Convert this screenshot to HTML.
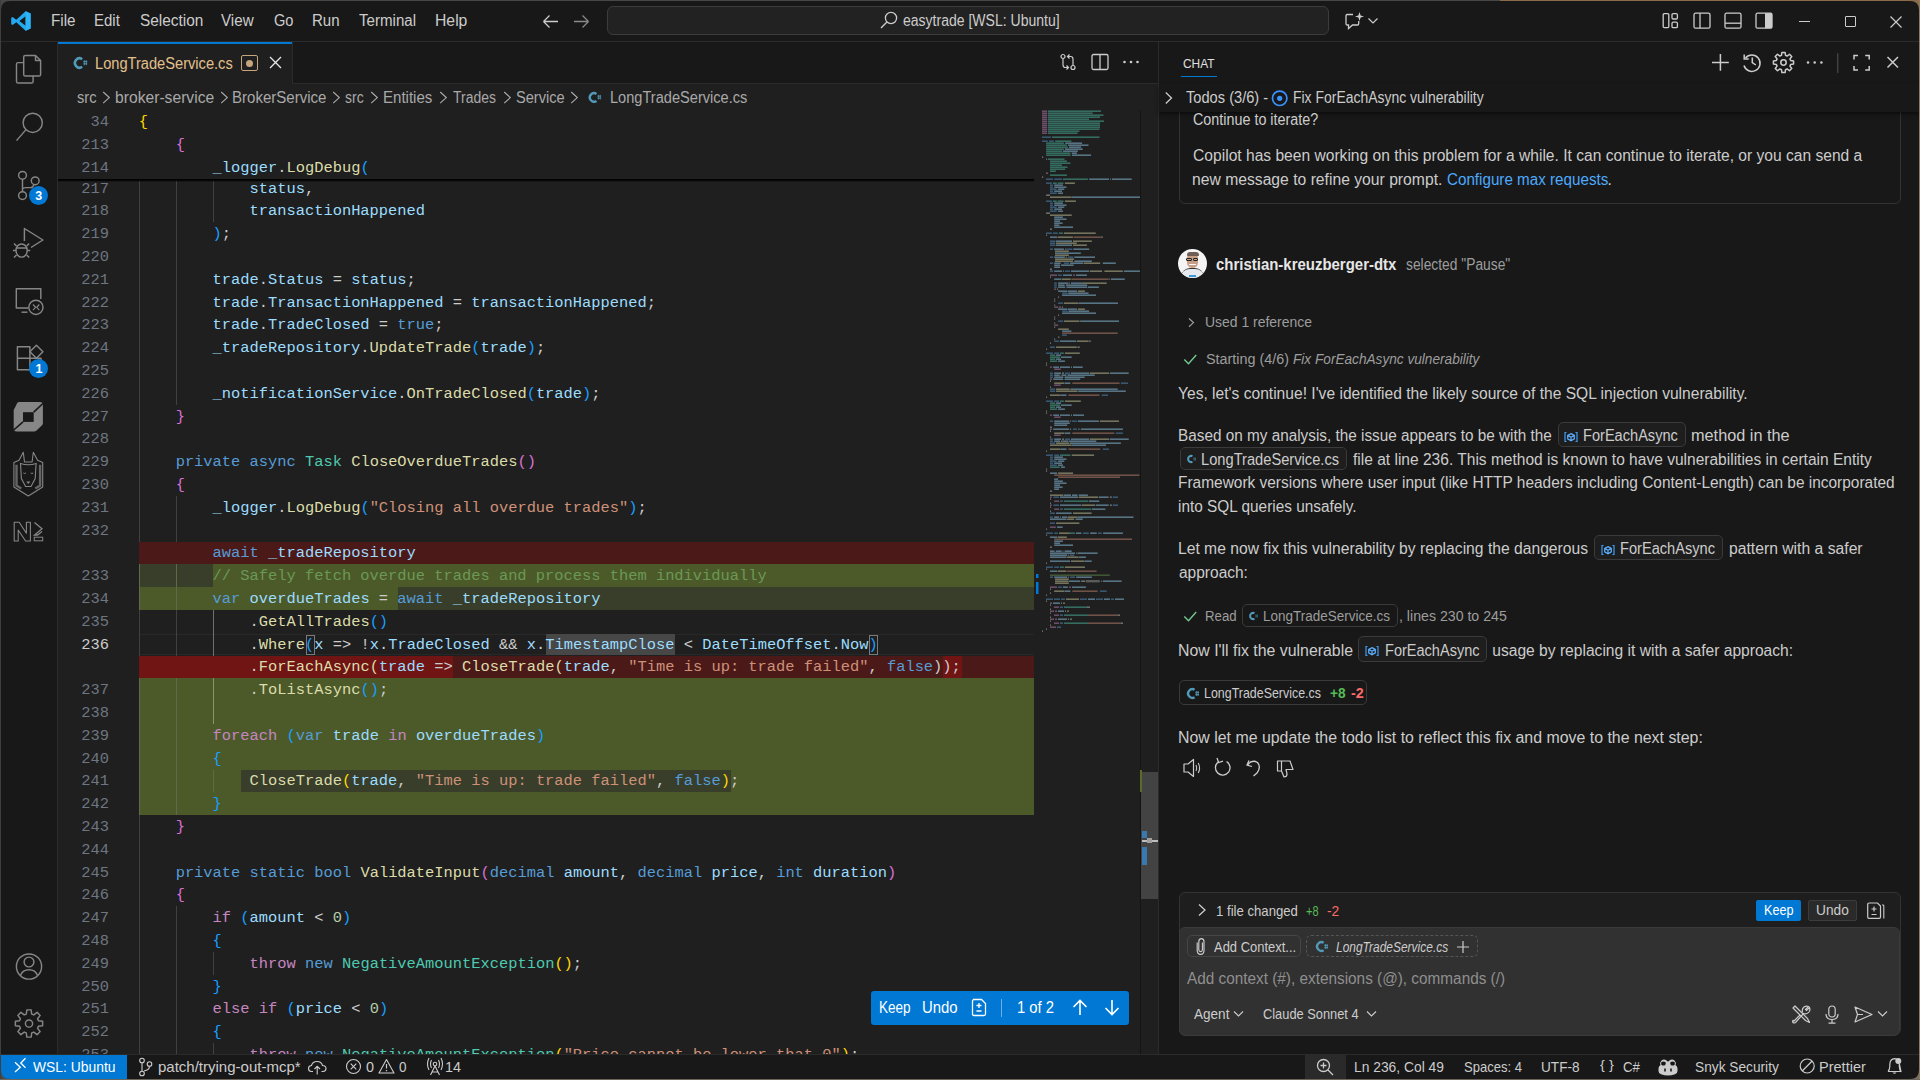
<!DOCTYPE html><html><head><meta charset="utf-8"><style>
*{margin:0;padding:0;box-sizing:border-box}
html,body{width:1920px;height:1080px;overflow:hidden;background:#181818}
.a{position:absolute;white-space:pre;line-height:0;font-family:'Liberation Sans';transform-origin:0 0}
.r{position:absolute}
.cl{position:absolute;left:0;height:22.8px;line-height:22.8px;font-family:'Liberation Mono';font-size:15.4px;white-space:pre}
</style></head><body><div class="r" style="left:0px;top:0px;width:1920px;height:1080px;background:#181818;"></div><div class="r" style="left:0px;top:41px;width:1920px;height:1px;background:#2b2b2b;"></div><svg class="r" style="left:10px;top:10px;" width="22" height="22" viewBox="0 0 22 22" fill="none"><path d="M15.6 1.2 L20.6 3.6 V18.4 L15.6 20.8 L6.3 12.3 L2.6 15.1 L1.2 14.3 V7.7 L2.6 6.9 L6.3 9.7 Z M15.6 6.2 L9.4 11 L15.6 15.8 Z" fill="#23a9f2" fill-rule="evenodd"/><path d="M15.6 1.2 L20.6 3.6 V18.4 L15.6 20.8 Z" fill="#2bb4f7"/></svg><div class="a" style="left:51.02px;top:20.62px;font-size:15.6px;color:#cccccc;transform:scaleX(0.9764);">File</div><div class="a" style="left:93.74px;top:20.62px;font-size:15.6px;color:#cccccc;transform:scaleX(0.9609);">Edit</div><div class="a" style="left:139.50px;top:20.62px;font-size:15.6px;color:#cccccc;transform:scaleX(0.9878);">Selection</div><div class="a" style="left:221.30px;top:20.62px;font-size:15.6px;color:#cccccc;transform:scaleX(0.9750);">View</div><div class="a" style="left:273.60px;top:20.62px;font-size:15.6px;color:#cccccc;transform:scaleX(0.9371);">Go</div><div class="a" style="left:312.43px;top:20.62px;font-size:15.6px;color:#cccccc;transform:scaleX(0.9653);">Run</div><div class="a" style="left:359.40px;top:20.62px;font-size:15.6px;color:#cccccc;transform:scaleX(0.9682);">Terminal</div><div class="a" style="left:435.39px;top:20.62px;font-size:15.6px;color:#cccccc;transform:scaleX(1.0096);">Help</div><svg class="r" style="left:541px;top:12px;" width="19" height="19" viewBox="0 0 19 19" fill="none"><path d="M2.5 9.5 H17 M2.5 9.5 L8.5 3.5 M2.5 9.5 L8.5 15.5" stroke="#cccccc" stroke-width="1.3"/></svg><svg class="r" style="left:572px;top:12px;" width="19" height="19" viewBox="0 0 19 19" fill="none"><path d="M16.5 9.5 H2 M16.5 9.5 L10.5 3.5 M16.5 9.5 L10.5 15.5" stroke="#8a8a8a" stroke-width="1.3"/></svg><div class="r" style="left:607px;top:6px;width:722px;height:29px;background:#222222;border:1px solid #3c3c3c;border-radius:6px"></div><svg class="r" style="left:879px;top:10px;" width="20" height="20" viewBox="0 0 20 20" fill="none"><circle cx="12" cy="8" r="5.6" stroke="#cccccc" stroke-width="1.3"/><path d="M7.9 12.1 L2 18" stroke="#cccccc" stroke-width="1.4"/></svg><div class="a" style="left:902.50px;top:20.82px;font-size:15.6px;color:#cccccc;transform:scaleX(0.8989);">easytrade [WSL: Ubuntu]</div><svg class="r" style="left:1343px;top:10px;" width="22" height="22" viewBox="0 0 22 22" fill="none"><path d="M10 4.5 H4.2 Q3 4.5 3 5.7 V13.8 Q3 15 4.2 15 H5.5 V18.5 L9.5 15 H14.5 Q15.7 15 15.7 13.8 V11" stroke="#cccccc" stroke-width="1.3" fill="none"/><path d="M16.5 2 L17.6 5.4 L21 6.5 L17.6 7.6 L16.5 11 L15.4 7.6 L12 6.5 L15.4 5.4 Z" fill="#cccccc"/></svg><svg class="r" style="left:1367px;top:16px;" width="12" height="10" viewBox="0 0 12 10" fill="none"><path d="M1.5 2.5 L6 7 L10.5 2.5" stroke="#cccccc" stroke-width="1.2"/></svg><svg class="r" style="left:1661px;top:11px;" width="20" height="20" viewBox="0 0 20 20" fill="none"><rect x="2.2" y="2.6" width="5.6" height="14" rx="1" stroke="#cccccc" stroke-width="1.3"/><rect x="11" y="2.6" width="5.4" height="5.4" rx="1.2" stroke="#cccccc" stroke-width="1.3"/><rect x="11" y="11.2" width="5.4" height="5.4" rx="1.2" stroke="#cccccc" stroke-width="1.3"/></svg><svg class="r" style="left:1692px;top:11px;" width="20" height="20" viewBox="0 0 20 20" fill="none"><rect x="2" y="2.2" width="16" height="15" rx="1.5" stroke="#cccccc" stroke-width="1.3"/><path d="M8 2.2 V17.2" stroke="#cccccc" stroke-width="1.3"/></svg><svg class="r" style="left:1723px;top:11px;" width="20" height="20" viewBox="0 0 20 20" fill="none"><rect x="2" y="2.2" width="16" height="15" rx="1.5" stroke="#cccccc" stroke-width="1.3"/><path d="M2 12.2 H18" stroke="#cccccc" stroke-width="1.3"/></svg><svg class="r" style="left:1754px;top:11px;" width="20" height="20" viewBox="0 0 20 20" fill="none"><rect x="2" y="2.2" width="16" height="15" rx="1.5" stroke="#cccccc" stroke-width="1.3"/><rect x="11" y="2.2" width="7" height="15" fill="#cccccc"/></svg><div class="r" style="left:1799px;top:20.5px;width:11px;height:1.2px;background:#cccccc;"></div><div class="r" style="left:1844.5px;top:15.5px;width:11px;height:11px;border:1.2px solid #cccccc;border-radius:1px"></div><svg class="r" style="left:1889px;top:15px;" width="14" height="14" viewBox="0 0 14 14" fill="none"><path d="M1.5 1.5 L12.5 12.5 M12.5 1.5 L1.5 12.5" stroke="#cccccc" stroke-width="1.2"/></svg><div class="r" style="left:57px;top:42px;width:1px;height:1012px;background:#2b2b2b;"></div><svg class="r" style="left:0;top:0" width="57" height="1054" viewBox="0 0 57 1054"><path d="M23.7 57 Q23.7 55.4 25.3 55.4 H35.5 L40.6 60.5 V74.4 Q40.6 76 39 76 H25.3 Q23.7 76 23.7 74.4 Z M35.5 55.4 V60.5 H40.6" stroke="#868686" stroke-width="1.45" fill="none" stroke-linejoin="round"/><path d="M23.7 62.6 H18.1 Q16.5 62.6 16.5 64.2 V81.4 Q16.5 83 18.1 83 H31.5 Q33.1 83 33.1 81.4 V76" stroke="#868686" stroke-width="1.45" fill="none" stroke-linejoin="round"/><circle cx="32.7" cy="122.8" r="9.6" stroke="#868686" stroke-width="1.45" fill="none" stroke-linejoin="round"/><path d="M26 129.6 L16.5 140.6" stroke="#868686" stroke-width="1.45" fill="none" stroke-linejoin="round"/><circle cx="22.5" cy="175.3" r="3.9" stroke="#868686" stroke-width="1.45" fill="none" stroke-linejoin="round"/><circle cx="22.5" cy="195.6" r="3.9" stroke="#868686" stroke-width="1.45" fill="none" stroke-linejoin="round"/><circle cx="35.2" cy="180.8" r="3.9" stroke="#868686" stroke-width="1.45" fill="none" stroke-linejoin="round"/><path d="M22.5 179.2 V191.7 M22.5 189 Q23 187.6 26 187.6 H30.5 Q33 187.6 34 184.5" stroke="#868686" stroke-width="1.45" fill="none" stroke-linejoin="round"/><path d="M24.4 241 V228.5 L42.9 240 L31 247.5" stroke="#868686" stroke-width="1.45" fill="none" stroke-linejoin="round"/><ellipse cx="21.6" cy="250.5" rx="5.6" ry="6.6" stroke="#868686" stroke-width="1.45" fill="none" stroke-linejoin="round"/><path d="M16 250.5 H13 M27.2 250.5 H30.2 M16.5 246 L14 243.5 M26.7 246 L29.2 243.5 M16.5 255 L14 257.5 M26.7 255 L29.2 257.5 M16.5 248 H26.7" stroke="#868686" stroke-width="1.45" fill="none" stroke-linejoin="round"/><path d="M28 308 H16.3 V288.8 H40.8 V299" stroke="#868686" stroke-width="1.45" fill="none" stroke-linejoin="round"/><path d="M21.5 312.2 H27.5" stroke="#868686" stroke-width="1.45" fill="none" stroke-linejoin="round"/><circle cx="35.9" cy="307.3" r="7.1" stroke="#868686" stroke-width="1.45" fill="none" stroke-linejoin="round"/><path d="M33 304.5 L35.6 307.3 L33 310.1 M39.3 304.5 L36.7 307.3 L39.3 310.1" stroke="#868686" stroke-width="1.2" fill="none"/><path d="M17.4 346.7 H29.9 V369.8 H17.4 Z M17.4 358.2 H41 V369.8 H29.9" stroke="#868686" stroke-width="1.45" fill="none" stroke-linejoin="round"/><path d="M36.4 345.3 L42.9 351.8 L36.4 358.3 L29.9 351.8 Z" stroke="#868686" stroke-width="1.45" fill="none" stroke-linejoin="round"/><path d="M19 401.9 H40 Q42.9 401.9 42.9 404.8 V423 Q42.9 424.5 41.8 425.6 L36.5 430.5 Q35.5 431.5 34 431.5 H16.6 Q13.7 431.5 13.7 428.6 V410.5 Q13.7 409 14.8 408 L17.2 403 Q18 401.9 19 401.9 Z" fill="#868686"/><path d="M23 412.2 H33.7 V421.9 H23 Z" fill="#181818"/><path d="M33.7 412.2 L42.9 403.5 M23 421.9 L13.7 430" stroke="#181818" stroke-width="1.6"/><path d="M28.3 496 L13.9 487 V462.5 L19 460.2 L23.3 452.3 L24.5 462 H32.1 L33.3 452.3 L37.6 460.2 L42.7 462.5 V487 Z" stroke="#868686" stroke-width="1.1" fill="none" stroke-linejoin="round"/><path d="M16.5 464.8 V485.6 L21.3 488.5 M40.1 464.8 V485.6 L35.3 488.5" stroke="#868686" stroke-width="2.4" fill="none" opacity="0.7"/><path d="M20.5 463.5 Q28.3 466 36.1 463.5 L35.2 478.5 L31 486.5 H25.6 L21.4 478.5 Z" stroke="#868686" stroke-width="1.1" fill="none"/><path d="M23.4 473 Q24.7 474 26 473 M30.6 473 Q31.9 474 33.2 473" stroke="#868686" stroke-width="1"/><path d="M26.2 481.5 H30.4 L28.3 484 Z" fill="#868686"/><path d="M14.2 541 V522.2 H19.2 L26.4 533.2 V522.2 H30.4 V541 H25.6 L18.2 530 V541 Z" stroke="#868686" stroke-width="1.1" fill="none" stroke-linejoin="round"/><path d="M34.5 522.5 L42 528.8 L34.5 535 H37.5 L42 531.5" stroke="#868686" stroke-width="1.3" fill="none"/><rect x="34.2" y="537.2" width="8.5" height="3.6" stroke="#868686" stroke-width="1" fill="none"/><circle cx="29" cy="966.5" r="12.6" stroke="#868686" stroke-width="1.45" fill="none" stroke-linejoin="round"/><circle cx="29" cy="962" r="4.9" stroke="#868686" stroke-width="1.45" fill="none" stroke-linejoin="round"/><path d="M20.5 975.5 Q22.5 969.8 29 969.8 Q35.5 969.8 37.5 975.5" stroke="#868686" stroke-width="1.45" fill="none" stroke-linejoin="round"/><path d="M42.63 1021.34 L42.63 1025.66 L38.42 1026.20 L37.57 1028.25 L40.16 1031.61 L37.11 1034.66 L33.75 1032.07 L31.70 1032.92 L31.16 1037.13 L26.84 1037.13 L26.30 1032.92 L24.25 1032.07 L20.89 1034.66 L17.84 1031.61 L20.43 1028.25 L19.58 1026.20 L15.37 1025.66 L15.37 1021.34 L19.58 1020.80 L20.43 1018.75 L17.84 1015.39 L20.89 1012.34 L24.25 1014.93 L26.30 1014.08 L26.84 1009.87 L31.16 1009.87 L31.70 1014.08 L33.75 1014.93 L37.11 1012.34 L40.16 1015.39 L37.57 1018.75 L38.42 1020.80 Z" stroke="#868686" stroke-width="1.45" fill="none" stroke-linejoin="round"/><circle cx="29" cy="1023.5" r="3.6" stroke="#868686" stroke-width="1.45" fill="none" stroke-linejoin="round"/></svg><div class="r" style="left:29px;top:186px;width:19px;height:19px;border-radius:10px;background:#0078d4"></div><div class="a" style="left:35.20px;top:195.89px;font-size:12.5px;color:#ffffff;font-weight:700;">3</div><div class="r" style="left:29px;top:359px;width:19px;height:19px;border-radius:10px;background:#0078d4"></div><div class="a" style="left:35.60px;top:368.89px;font-size:12.5px;color:#ffffff;font-weight:700;">1</div><div class="r" style="left:58px;top:42px;width:1100px;height:42px;background:#181818;"></div><div class="r" style="left:58px;top:83px;width:1100px;height:1px;background:#2b2b2b;"></div><div class="r" style="left:58px;top:42px;width:234px;height:42px;background:#1f1f1f;"></div><div class="r" style="left:58px;top:42px;width:234px;height:1.5px;background:#0078d4;"></div><div class="r" style="left:292px;top:42px;width:1px;height:41px;background:#2b2b2b;"></div><svg class="r" style="left:73px;top:55.5px;" width="16.0" height="14.0" viewBox="0 0 16 14" fill="none"><path d="M9.2 3.2 A4.6 4.6 0 1 0 9.2 10.8" stroke="#519aba" stroke-width="2.6" fill="none"/><path d="M11.3 4.2 V9.2 M13.3 4.2 V9.2 M10.3 5.6 H14.3 M10.3 7.8 H14.3" stroke="#519aba" stroke-width="0.9"/></svg><div class="a" style="left:95.36px;top:63.62px;font-size:15.6px;color:#e2c08d;transform:scaleX(0.9385);">LongTradeService.cs</div><div class="r" style="left:241px;top:54.5px;width:17px;height:16.5px;border:1.6px solid #c4a57c;border-radius:2px"></div><div class="r" style="left:246.2px;top:59.5px;width:7px;height:7px;border-radius:4px;background:#c4a57c"></div><svg class="r" style="left:268px;top:55px;" width="15" height="15" viewBox="0 0 15 15" fill="none"><path d="M2 2 L13 13 M13 2 L2 13" stroke="#e8e8e8" stroke-width="1.3"/></svg><svg class="r" style="left:1058px;top:52px;" width="20" height="20" viewBox="0 0 20 20" fill="none"><circle cx="5" cy="4.5" r="2" stroke="#cccccc" stroke-width="1.2"/><circle cx="15" cy="15.5" r="2" stroke="#cccccc" stroke-width="1.2"/><path d="M5 6.5 V13 Q5 15.5 7.5 15.5 H10 M8.5 13.5 L10.5 15.5 L8.5 17.5 M15 13.5 V7 Q15 4.5 12.5 4.5 H10 M11.5 2.5 L9.5 4.5 L11.5 6.5" stroke="#cccccc" stroke-width="1.2" fill="none"/></svg><svg class="r" style="left:1090px;top:52px;" width="20" height="20" viewBox="0 0 20 20" fill="none"><rect x="2" y="2.5" width="16" height="15" rx="1.5" stroke="#cccccc" stroke-width="1.3"/><path d="M10 2.5 V17.5" stroke="#cccccc" stroke-width="1.3"/></svg><svg class="r" style="left:1121px;top:52px;" width="20" height="20" viewBox="0 0 20 20" fill="none"><circle cx="3.5" cy="10" r="1.3" fill="#cccccc"/><circle cx="10" cy="10" r="1.3" fill="#cccccc"/><circle cx="16.5" cy="10" r="1.3" fill="#cccccc"/></svg><div class="r" style="left:58px;top:84px;width:1100px;height:970px;background:#1f1f1f;"></div><div class="a" style="left:76.60px;top:98.12px;font-size:15.6px;color:#a9a9a9;transform:scaleX(0.9386);">src</div><div class="a" style="left:115.00px;top:98.12px;font-size:15.6px;color:#a9a9a9;transform:scaleX(1.0040);">broker-service</div><div class="a" style="left:232.24px;top:98.12px;font-size:15.6px;color:#a9a9a9;transform:scaleX(0.9641);">BrokerService</div><div class="a" style="left:345.40px;top:98.12px;font-size:15.6px;color:#a9a9a9;transform:scaleX(0.8957);">src</div><div class="a" style="left:383.43px;top:98.12px;font-size:15.6px;color:#a9a9a9;transform:scaleX(0.9654);">Entities</div><div class="a" style="left:453.30px;top:98.12px;font-size:15.6px;color:#a9a9a9;transform:scaleX(0.8950);">Trades</div><div class="a" style="left:516.20px;top:98.12px;font-size:15.6px;color:#a9a9a9;transform:scaleX(0.9352);">Service</div><div class="a" style="left:609.76px;top:98.12px;font-size:15.6px;color:#a9a9a9;transform:scaleX(0.9358);">LongTradeService.cs</div><svg class="r" style="left:102.0px;top:91px;" width="9" height="14" viewBox="0 0 9 14" fill="none"><path d="M1.2 1 L7.3 6.6 L1.2 12.2" stroke="#a9a9a9" stroke-width="1.15" fill="none"/></svg><svg class="r" style="left:219.5px;top:91px;" width="9" height="14" viewBox="0 0 9 14" fill="none"><path d="M1.2 1 L7.3 6.6 L1.2 12.2" stroke="#a9a9a9" stroke-width="1.15" fill="none"/></svg><svg class="r" style="left:331.8px;top:91px;" width="9" height="14" viewBox="0 0 9 14" fill="none"><path d="M1.2 1 L7.3 6.6 L1.2 12.2" stroke="#a9a9a9" stroke-width="1.15" fill="none"/></svg><svg class="r" style="left:370.3px;top:91px;" width="9" height="14" viewBox="0 0 9 14" fill="none"><path d="M1.2 1 L7.3 6.6 L1.2 12.2" stroke="#a9a9a9" stroke-width="1.15" fill="none"/></svg><svg class="r" style="left:439.2px;top:91px;" width="9" height="14" viewBox="0 0 9 14" fill="none"><path d="M1.2 1 L7.3 6.6 L1.2 12.2" stroke="#a9a9a9" stroke-width="1.15" fill="none"/></svg><svg class="r" style="left:502.5px;top:91px;" width="9" height="14" viewBox="0 0 9 14" fill="none"><path d="M1.2 1 L7.3 6.6 L1.2 12.2" stroke="#a9a9a9" stroke-width="1.15" fill="none"/></svg><svg class="r" style="left:570.2px;top:91px;" width="9" height="14" viewBox="0 0 9 14" fill="none"><path d="M1.2 1 L7.3 6.6 L1.2 12.2" stroke="#a9a9a9" stroke-width="1.15" fill="none"/></svg><svg class="r" style="left:587.5px;top:90.5px;" width="14.72" height="12.88" viewBox="0 0 16 14" fill="none"><path d="M9.2 3.2 A4.6 4.6 0 1 0 9.2 10.8" stroke="#519aba" stroke-width="2.6" fill="none"/><path d="M11.3 4.2 V9.2 M13.3 4.2 V9.2 M10.3 5.6 H14.3 M10.3 7.8 H14.3" stroke="#519aba" stroke-width="0.9"/></svg><div class="r" style="left:139px;top:541.6px;width:895px;height:22.8px;background:#4c1919;"></div><div class="r" style="left:139px;top:564.4000000000001px;width:895px;height:45.6px;background:#383e2a;"></div><div class="r" style="left:213.12px;top:564.4px;width:820.88px;height:22.8px;background:#4c5a2a;"></div><div class="r" style="left:139.2px;top:587.2px;width:258.72px;height:22.8px;background:#4c5a2a;"></div><div class="r" style="left:139px;top:655.6px;width:895px;height:22.8px;background:#4c1919;"></div><div class="r" style="left:139.2px;top:655.6px;width:314.16px;height:22.8px;background:#701414;"></div><div class="r" style="left:943.08px;top:655.6px;width:18.48px;height:22.8px;background:#701414;"></div><div class="r" style="left:139px;top:678.4000000000001px;width:895px;height:136.8px;background:#383e2a;"></div><div class="r" style="left:139.2px;top:678.4px;width:894.8px;height:22.8px;background:#4c5a2a;"></div><div class="r" style="left:139.2px;top:701.2px;width:894.8px;height:22.8px;background:#4c5a2a;"></div><div class="r" style="left:139.2px;top:724.0px;width:894.8px;height:22.8px;background:#4c5a2a;"></div><div class="r" style="left:139.2px;top:746.8px;width:894.8px;height:22.8px;background:#4c5a2a;"></div><div class="r" style="left:139.2px;top:792.4px;width:894.8px;height:22.8px;background:#4c5a2a;"></div><div class="r" style="left:139.2px;top:769.6px;width:101.64px;height:22.8px;background:#4c5a2a;"></div><div class="r" style="left:730.56px;top:769.6px;width:303.44px;height:22.8px;background:#4c5a2a;"></div><div class="r" style="left:139px;top:633.8px;width:895px;height:1.5px;background:#282828;"></div><div class="r" style="left:139px;top:653.6px;width:895px;height:1.5px;background:#282828;"></div><div class="r" style="left:545.76px;top:633.8px;width:129.36px;height:20.8px;background:#474747;"></div><div class="r" style="left:305.52px;top:634.80px;width:9.24px;height:19.80px;border:1px solid #7a7a7a"></div><div class="r" style="left:869.16px;top:634.80px;width:9.24px;height:19.80px;border:1px solid #7a7a7a"></div><div class="r" style="left:139px;top:176.8px;width:1px;height:22.8px;background:#404040;"></div><div class="r" style="left:176px;top:176.8px;width:1px;height:22.8px;background:#404040;"></div><div class="r" style="left:213px;top:176.8px;width:1px;height:22.8px;background:#404040;"></div><div class="r" style="left:139px;top:199.60000000000002px;width:1px;height:22.8px;background:#404040;"></div><div class="r" style="left:176px;top:199.60000000000002px;width:1px;height:22.8px;background:#404040;"></div><div class="r" style="left:213px;top:199.60000000000002px;width:1px;height:22.8px;background:#404040;"></div><div class="r" style="left:139px;top:222.4px;width:1px;height:22.8px;background:#404040;"></div><div class="r" style="left:176px;top:222.4px;width:1px;height:22.8px;background:#404040;"></div><div class="r" style="left:139px;top:245.20000000000002px;width:1px;height:22.8px;background:#404040;"></div><div class="r" style="left:176px;top:245.20000000000002px;width:1px;height:22.8px;background:#404040;"></div><div class="r" style="left:139px;top:268.0px;width:1px;height:22.8px;background:#404040;"></div><div class="r" style="left:176px;top:268.0px;width:1px;height:22.8px;background:#404040;"></div><div class="r" style="left:139px;top:290.8px;width:1px;height:22.8px;background:#404040;"></div><div class="r" style="left:176px;top:290.8px;width:1px;height:22.8px;background:#404040;"></div><div class="r" style="left:139px;top:313.6px;width:1px;height:22.8px;background:#404040;"></div><div class="r" style="left:176px;top:313.6px;width:1px;height:22.8px;background:#404040;"></div><div class="r" style="left:139px;top:336.4px;width:1px;height:22.8px;background:#404040;"></div><div class="r" style="left:176px;top:336.4px;width:1px;height:22.8px;background:#404040;"></div><div class="r" style="left:139px;top:359.20000000000005px;width:1px;height:22.8px;background:#404040;"></div><div class="r" style="left:176px;top:359.20000000000005px;width:1px;height:22.8px;background:#404040;"></div><div class="r" style="left:139px;top:382.0px;width:1px;height:22.8px;background:#404040;"></div><div class="r" style="left:176px;top:382.0px;width:1px;height:22.8px;background:#404040;"></div><div class="r" style="left:139px;top:404.8px;width:1px;height:22.8px;background:#404040;"></div><div class="r" style="left:139px;top:427.6px;width:1px;height:22.8px;background:#404040;"></div><div class="r" style="left:139px;top:450.40000000000003px;width:1px;height:22.8px;background:#404040;"></div><div class="r" style="left:139px;top:473.20000000000005px;width:1px;height:22.8px;background:#404040;"></div><div class="r" style="left:139px;top:496.0px;width:1px;height:22.8px;background:#404040;"></div><div class="r" style="left:176px;top:496.0px;width:1px;height:22.8px;background:#404040;"></div><div class="r" style="left:139px;top:518.8px;width:1px;height:22.8px;background:#404040;"></div><div class="r" style="left:176px;top:518.8px;width:1px;height:22.8px;background:#404040;"></div><div class="r" style="left:139px;top:564.4000000000001px;width:1px;height:22.8px;background:#5f6a48;"></div><div class="r" style="left:176px;top:564.4000000000001px;width:1px;height:22.8px;background:#5f6a48;"></div><div class="r" style="left:139px;top:587.2px;width:1px;height:22.8px;background:#5f6a48;"></div><div class="r" style="left:176px;top:587.2px;width:1px;height:22.8px;background:#5f6a48;"></div><div class="r" style="left:139px;top:610.0px;width:1px;height:22.8px;background:#404040;"></div><div class="r" style="left:176px;top:610.0px;width:1px;height:22.8px;background:#404040;"></div><div class="r" style="left:213px;top:610.0px;width:1px;height:22.8px;background:#707070;"></div><div class="r" style="left:139px;top:632.8px;width:1px;height:22.8px;background:#404040;"></div><div class="r" style="left:176px;top:632.8px;width:1px;height:22.8px;background:#404040;"></div><div class="r" style="left:213px;top:632.8px;width:1px;height:22.8px;background:#707070;"></div><div class="r" style="left:139px;top:678.4000000000001px;width:1px;height:22.8px;background:#5f6a48;"></div><div class="r" style="left:176px;top:678.4000000000001px;width:1px;height:22.8px;background:#5f6a48;"></div><div class="r" style="left:213px;top:678.4000000000001px;width:1px;height:22.8px;background:#8a9470;"></div><div class="r" style="left:139px;top:701.2px;width:1px;height:22.8px;background:#5f6a48;"></div><div class="r" style="left:176px;top:701.2px;width:1px;height:22.8px;background:#5f6a48;"></div><div class="r" style="left:213px;top:701.2px;width:1px;height:22.8px;background:#8a9470;"></div><div class="r" style="left:139px;top:724.0px;width:1px;height:22.8px;background:#5f6a48;"></div><div class="r" style="left:176px;top:724.0px;width:1px;height:22.8px;background:#5f6a48;"></div><div class="r" style="left:139px;top:746.8px;width:1px;height:22.8px;background:#5f6a48;"></div><div class="r" style="left:176px;top:746.8px;width:1px;height:22.8px;background:#5f6a48;"></div><div class="r" style="left:139px;top:769.6000000000001px;width:1px;height:22.8px;background:#5f6a48;"></div><div class="r" style="left:176px;top:769.6000000000001px;width:1px;height:22.8px;background:#5f6a48;"></div><div class="r" style="left:213px;top:769.6000000000001px;width:1px;height:22.8px;background:#5f6a48;"></div><div class="r" style="left:139px;top:792.4000000000001px;width:1px;height:22.8px;background:#5f6a48;"></div><div class="r" style="left:176px;top:792.4000000000001px;width:1px;height:22.8px;background:#5f6a48;"></div><div class="r" style="left:139px;top:815.2px;width:1px;height:22.8px;background:#404040;"></div><div class="r" style="left:139px;top:838.0px;width:1px;height:22.8px;background:#404040;"></div><div class="r" style="left:139px;top:860.8px;width:1px;height:22.8px;background:#404040;"></div><div class="r" style="left:139px;top:883.6000000000001px;width:1px;height:22.8px;background:#404040;"></div><div class="r" style="left:139px;top:906.4000000000001px;width:1px;height:22.8px;background:#404040;"></div><div class="r" style="left:176px;top:906.4000000000001px;width:1px;height:22.8px;background:#404040;"></div><div class="r" style="left:139px;top:929.2px;width:1px;height:22.8px;background:#404040;"></div><div class="r" style="left:176px;top:929.2px;width:1px;height:22.8px;background:#404040;"></div><div class="r" style="left:139px;top:952.0px;width:1px;height:22.8px;background:#404040;"></div><div class="r" style="left:176px;top:952.0px;width:1px;height:22.8px;background:#404040;"></div><div class="r" style="left:213px;top:952.0px;width:1px;height:22.8px;background:#404040;"></div><div class="r" style="left:139px;top:974.8px;width:1px;height:22.8px;background:#404040;"></div><div class="r" style="left:176px;top:974.8px;width:1px;height:22.8px;background:#404040;"></div><div class="r" style="left:139px;top:997.6000000000001px;width:1px;height:22.8px;background:#404040;"></div><div class="r" style="left:176px;top:997.6000000000001px;width:1px;height:22.8px;background:#404040;"></div><div class="r" style="left:139px;top:1020.4000000000001px;width:1px;height:22.8px;background:#404040;"></div><div class="r" style="left:176px;top:1020.4000000000001px;width:1px;height:22.8px;background:#404040;"></div><div class="r" style="left:139px;top:1043.2px;width:1px;height:22.8px;background:#404040;"></div><div class="r" style="left:176px;top:1043.2px;width:1px;height:22.8px;background:#404040;"></div><div class="r" style="left:213px;top:1043.2px;width:1px;height:22.8px;background:#404040;"></div><div class="cl" style="left:59.4px;width:49.5px;text-align:right;top:177.60px;color:#6e7681">217</div><div class="cl" style="left:138.7px;top:177.60px"><span style="color:#cccccc">            </span><span style="color:#9cdcfe">status</span><span style="color:#cccccc">,</span></div><div class="cl" style="left:59.4px;width:49.5px;text-align:right;top:200.40px;color:#6e7681">218</div><div class="cl" style="left:138.7px;top:200.40px"><span style="color:#cccccc">            </span><span style="color:#9cdcfe">transactionHappened</span></div><div class="cl" style="left:59.4px;width:49.5px;text-align:right;top:223.20px;color:#6e7681">219</div><div class="cl" style="left:138.7px;top:223.20px"><span style="color:#cccccc">        </span><span style="color:#179fff">)</span><span style="color:#cccccc">;</span></div><div class="cl" style="left:59.4px;width:49.5px;text-align:right;top:246.00px;color:#6e7681">220</div><div class="cl" style="left:138.7px;top:246.00px"></div><div class="cl" style="left:59.4px;width:49.5px;text-align:right;top:268.80px;color:#6e7681">221</div><div class="cl" style="left:138.7px;top:268.80px"><span style="color:#cccccc">        </span><span style="color:#9cdcfe">trade</span><span style="color:#cccccc">.</span><span style="color:#9cdcfe">Status</span><span style="color:#cccccc"> = </span><span style="color:#9cdcfe">status</span><span style="color:#cccccc">;</span></div><div class="cl" style="left:59.4px;width:49.5px;text-align:right;top:291.60px;color:#6e7681">222</div><div class="cl" style="left:138.7px;top:291.60px"><span style="color:#cccccc">        </span><span style="color:#9cdcfe">trade</span><span style="color:#cccccc">.</span><span style="color:#9cdcfe">TransactionHappened</span><span style="color:#cccccc"> = </span><span style="color:#9cdcfe">transactionHappened</span><span style="color:#cccccc">;</span></div><div class="cl" style="left:59.4px;width:49.5px;text-align:right;top:314.40px;color:#6e7681">223</div><div class="cl" style="left:138.7px;top:314.40px"><span style="color:#cccccc">        </span><span style="color:#9cdcfe">trade</span><span style="color:#cccccc">.</span><span style="color:#9cdcfe">TradeClosed</span><span style="color:#cccccc"> = </span><span style="color:#569cd6">true</span><span style="color:#cccccc">;</span></div><div class="cl" style="left:59.4px;width:49.5px;text-align:right;top:337.20px;color:#6e7681">224</div><div class="cl" style="left:138.7px;top:337.20px"><span style="color:#cccccc">        </span><span style="color:#9cdcfe">_tradeRepository</span><span style="color:#cccccc">.</span><span style="color:#dcdcaa">UpdateTrade</span><span style="color:#179fff">(</span><span style="color:#9cdcfe">trade</span><span style="color:#179fff">)</span><span style="color:#cccccc">;</span></div><div class="cl" style="left:59.4px;width:49.5px;text-align:right;top:360.00px;color:#6e7681">225</div><div class="cl" style="left:138.7px;top:360.00px"></div><div class="cl" style="left:59.4px;width:49.5px;text-align:right;top:382.80px;color:#6e7681">226</div><div class="cl" style="left:138.7px;top:382.80px"><span style="color:#cccccc">        </span><span style="color:#9cdcfe">_notificationService</span><span style="color:#cccccc">.</span><span style="color:#dcdcaa">OnTradeClosed</span><span style="color:#179fff">(</span><span style="color:#9cdcfe">trade</span><span style="color:#179fff">)</span><span style="color:#cccccc">;</span></div><div class="cl" style="left:59.4px;width:49.5px;text-align:right;top:405.60px;color:#6e7681">227</div><div class="cl" style="left:138.7px;top:405.60px"><span style="color:#cccccc">    </span><span style="color:#da70d6">}</span></div><div class="cl" style="left:59.4px;width:49.5px;text-align:right;top:428.40px;color:#6e7681">228</div><div class="cl" style="left:138.7px;top:428.40px"></div><div class="cl" style="left:59.4px;width:49.5px;text-align:right;top:451.20px;color:#6e7681">229</div><div class="cl" style="left:138.7px;top:451.20px"><span style="color:#cccccc">    </span><span style="color:#569cd6">private</span><span style="color:#cccccc"> </span><span style="color:#569cd6">async</span><span style="color:#cccccc"> </span><span style="color:#4ec9b0">Task</span><span style="color:#cccccc"> </span><span style="color:#dcdcaa">CloseOverdueTrades</span><span style="color:#da70d6">()</span></div><div class="cl" style="left:59.4px;width:49.5px;text-align:right;top:474.00px;color:#6e7681">230</div><div class="cl" style="left:138.7px;top:474.00px"><span style="color:#cccccc">    </span><span style="color:#da70d6">{</span></div><div class="cl" style="left:59.4px;width:49.5px;text-align:right;top:496.80px;color:#6e7681">231</div><div class="cl" style="left:138.7px;top:496.80px"><span style="color:#cccccc">        </span><span style="color:#9cdcfe">_logger</span><span style="color:#cccccc">.</span><span style="color:#dcdcaa">LogDebug</span><span style="color:#179fff">(</span><span style="color:#ce9178">&quot;Closing all overdue trades&quot;</span><span style="color:#179fff">)</span><span style="color:#cccccc">;</span></div><div class="cl" style="left:59.4px;width:49.5px;text-align:right;top:519.60px;color:#6e7681">232</div><div class="cl" style="left:138.7px;top:519.60px"></div><div class="cl" style="left:138.7px;top:542.40px"><span style="color:#cccccc">        </span><span style="color:#569cd6">await</span><span style="color:#cccccc"> </span><span style="color:#9cdcfe">_tradeRepository</span></div><div class="cl" style="left:59.4px;width:49.5px;text-align:right;top:565.20px;color:#6e7681">233</div><div class="cl" style="left:138.7px;top:565.20px"><span style="color:#cccccc">        </span><span style="color:#6a9955">// Safely fetch overdue trades and process them individually</span></div><div class="cl" style="left:59.4px;width:49.5px;text-align:right;top:588.00px;color:#6e7681">234</div><div class="cl" style="left:138.7px;top:588.00px"><span style="color:#cccccc">        </span><span style="color:#569cd6">var</span><span style="color:#cccccc"> </span><span style="color:#9cdcfe">overdueTrades</span><span style="color:#cccccc"> = </span><span style="color:#569cd6">await</span><span style="color:#cccccc"> </span><span style="color:#9cdcfe">_tradeRepository</span></div><div class="cl" style="left:59.4px;width:49.5px;text-align:right;top:610.80px;color:#6e7681">235</div><div class="cl" style="left:138.7px;top:610.80px"><span style="color:#cccccc">            </span><span style="color:#cccccc">.</span><span style="color:#dcdcaa">GetAllTrades</span><span style="color:#179fff">()</span></div><div class="cl" style="left:59.4px;width:49.5px;text-align:right;top:633.60px;color:#cccccc">236</div><div class="cl" style="left:138.7px;top:633.60px"><span style="color:#cccccc">            </span><span style="color:#cccccc">.</span><span style="color:#dcdcaa">Where</span><span style="color:#179fff">(</span><span style="color:#9cdcfe">x</span><span style="color:#cccccc"> =&gt; !</span><span style="color:#9cdcfe">x</span><span style="color:#cccccc">.</span><span style="color:#9cdcfe">TradeClosed</span><span style="color:#cccccc"> &amp;&amp; </span><span style="color:#9cdcfe">x</span><span style="color:#cccccc">.</span><span style="color:#9cdcfe">TimestampClose</span><span style="color:#cccccc"> &lt; </span><span style="color:#9cdcfe">DateTimeOffset</span><span style="color:#cccccc">.</span><span style="color:#9cdcfe">Now</span><span style="color:#179fff">)</span></div><div class="cl" style="left:138.7px;top:656.40px"><span style="color:#cccccc">            </span><span style="color:#cccccc">.</span><span style="color:#dcdcaa">ForEachAsync</span><span style="color:#dcdcaa">(</span><span style="color:#9cdcfe">trade</span><span style="color:#cccccc"> =&gt; </span><span style="color:#dcdcaa">CloseTrade</span><span style="color:#dcdcaa">(</span><span style="color:#9cdcfe">trade</span><span style="color:#cccccc">, </span><span style="color:#ce9178">&quot;Time is up: trade failed&quot;</span><span style="color:#cccccc">, </span><span style="color:#569cd6">false</span><span style="color:#cccccc">))</span><span style="color:#cccccc">;</span></div><div class="cl" style="left:59.4px;width:49.5px;text-align:right;top:679.20px;color:#6e7681">237</div><div class="cl" style="left:138.7px;top:679.20px"><span style="color:#cccccc">            </span><span style="color:#cccccc">.</span><span style="color:#dcdcaa">ToListAsync</span><span style="color:#179fff">()</span><span style="color:#cccccc">;</span></div><div class="cl" style="left:59.4px;width:49.5px;text-align:right;top:702.00px;color:#6e7681">238</div><div class="cl" style="left:138.7px;top:702.00px"></div><div class="cl" style="left:59.4px;width:49.5px;text-align:right;top:724.80px;color:#6e7681">239</div><div class="cl" style="left:138.7px;top:724.80px"><span style="color:#cccccc">        </span><span style="color:#c586c0">foreach</span><span style="color:#cccccc"> </span><span style="color:#179fff">(</span><span style="color:#569cd6">var</span><span style="color:#cccccc"> </span><span style="color:#9cdcfe">trade</span><span style="color:#cccccc"> </span><span style="color:#c586c0">in</span><span style="color:#cccccc"> </span><span style="color:#9cdcfe">overdueTrades</span><span style="color:#179fff">)</span></div><div class="cl" style="left:59.4px;width:49.5px;text-align:right;top:747.60px;color:#6e7681">240</div><div class="cl" style="left:138.7px;top:747.60px"><span style="color:#cccccc">        </span><span style="color:#179fff">{</span></div><div class="cl" style="left:59.4px;width:49.5px;text-align:right;top:770.40px;color:#6e7681">241</div><div class="cl" style="left:138.7px;top:770.40px"><span style="color:#cccccc">            </span><span style="color:#dcdcaa">CloseTrade</span><span style="color:#ffd700">(</span><span style="color:#9cdcfe">trade</span><span style="color:#cccccc">, </span><span style="color:#ce9178">&quot;Time is up: trade failed&quot;</span><span style="color:#cccccc">, </span><span style="color:#569cd6">false</span><span style="color:#ffd700">)</span><span style="color:#cccccc">;</span></div><div class="cl" style="left:59.4px;width:49.5px;text-align:right;top:793.20px;color:#6e7681">242</div><div class="cl" style="left:138.7px;top:793.20px"><span style="color:#cccccc">        </span><span style="color:#179fff">}</span></div><div class="cl" style="left:59.4px;width:49.5px;text-align:right;top:816.00px;color:#6e7681">243</div><div class="cl" style="left:138.7px;top:816.00px"><span style="color:#cccccc">    </span><span style="color:#da70d6">}</span></div><div class="cl" style="left:59.4px;width:49.5px;text-align:right;top:838.80px;color:#6e7681">244</div><div class="cl" style="left:138.7px;top:838.80px"></div><div class="cl" style="left:59.4px;width:49.5px;text-align:right;top:861.60px;color:#6e7681">245</div><div class="cl" style="left:138.7px;top:861.60px"><span style="color:#cccccc">    </span><span style="color:#569cd6">private</span><span style="color:#cccccc"> </span><span style="color:#569cd6">static</span><span style="color:#cccccc"> </span><span style="color:#569cd6">bool</span><span style="color:#cccccc"> </span><span style="color:#dcdcaa">ValidateInput</span><span style="color:#da70d6">(</span><span style="color:#569cd6">decimal</span><span style="color:#cccccc"> </span><span style="color:#9cdcfe">amount</span><span style="color:#cccccc">, </span><span style="color:#569cd6">decimal</span><span style="color:#cccccc"> </span><span style="color:#9cdcfe">price</span><span style="color:#cccccc">, </span><span style="color:#569cd6">int</span><span style="color:#cccccc"> </span><span style="color:#9cdcfe">duration</span><span style="color:#da70d6">)</span></div><div class="cl" style="left:59.4px;width:49.5px;text-align:right;top:884.40px;color:#6e7681">246</div><div class="cl" style="left:138.7px;top:884.40px"><span style="color:#cccccc">    </span><span style="color:#da70d6">{</span></div><div class="cl" style="left:59.4px;width:49.5px;text-align:right;top:907.20px;color:#6e7681">247</div><div class="cl" style="left:138.7px;top:907.20px"><span style="color:#cccccc">        </span><span style="color:#c586c0">if</span><span style="color:#cccccc"> </span><span style="color:#179fff">(</span><span style="color:#9cdcfe">amount</span><span style="color:#cccccc"> &lt; </span><span style="color:#b5cea8">0</span><span style="color:#179fff">)</span></div><div class="cl" style="left:59.4px;width:49.5px;text-align:right;top:930.00px;color:#6e7681">248</div><div class="cl" style="left:138.7px;top:930.00px"><span style="color:#cccccc">        </span><span style="color:#179fff">{</span></div><div class="cl" style="left:59.4px;width:49.5px;text-align:right;top:952.80px;color:#6e7681">249</div><div class="cl" style="left:138.7px;top:952.80px"><span style="color:#cccccc">            </span><span style="color:#c586c0">throw</span><span style="color:#cccccc"> </span><span style="color:#569cd6">new</span><span style="color:#cccccc"> </span><span style="color:#4ec9b0">NegativeAmountException</span><span style="color:#ffd700">()</span><span style="color:#cccccc">;</span></div><div class="cl" style="left:59.4px;width:49.5px;text-align:right;top:975.60px;color:#6e7681">250</div><div class="cl" style="left:138.7px;top:975.60px"><span style="color:#cccccc">        </span><span style="color:#179fff">}</span></div><div class="cl" style="left:59.4px;width:49.5px;text-align:right;top:998.40px;color:#6e7681">251</div><div class="cl" style="left:138.7px;top:998.40px"><span style="color:#cccccc">        </span><span style="color:#c586c0">else</span><span style="color:#cccccc"> </span><span style="color:#c586c0">if</span><span style="color:#cccccc"> </span><span style="color:#179fff">(</span><span style="color:#9cdcfe">price</span><span style="color:#cccccc"> &lt; </span><span style="color:#b5cea8">0</span><span style="color:#179fff">)</span></div><div class="cl" style="left:59.4px;width:49.5px;text-align:right;top:1021.20px;color:#6e7681">252</div><div class="cl" style="left:138.7px;top:1021.20px"><span style="color:#cccccc">        </span><span style="color:#179fff">{</span></div><div class="cl" style="left:59.4px;width:49.5px;text-align:right;top:1044.00px;color:#6e7681">253</div><div class="cl" style="left:138.7px;top:1044.00px"><span style="color:#cccccc">            </span><span style="color:#c586c0">throw</span><span style="color:#cccccc"> </span><span style="color:#569cd6">new</span><span style="color:#cccccc"> </span><span style="color:#4ec9b0">NegativeAmountException</span><span style="color:#ffd700">(</span><span style="color:#ce9178">&quot;Price cannot be lower that 0&quot;</span><span style="color:#ffd700">)</span><span style="color:#cccccc">;</span></div><div class="r" style="left:58px;top:110.4px;width:976px;height:68.4px;background:#1f1f1f"></div><div class="r" style="left:58px;top:178.8px;width:976px;height:3.6px;background:linear-gradient(rgba(0,0,0,1),rgba(0,0,0,0.85) 45%,rgba(0,0,0,0))"></div><div class="cl" style="left:59.4px;width:49.5px;text-align:right;top:111.20px;color:#6e7681">34</div><div class="cl" style="left:138.7px;top:111.20px"><span style="color:#ffd700">{</span></div><div class="cl" style="left:59.4px;width:49.5px;text-align:right;top:134.00px;color:#6e7681">213</div><div class="cl" style="left:138.7px;top:134.00px"><span style="color:#cccccc">    </span><span style="color:#da70d6">{</span></div><div class="cl" style="left:59.4px;width:49.5px;text-align:right;top:156.80px;color:#6e7681">214</div><div class="cl" style="left:138.7px;top:156.80px"><span style="color:#cccccc">        </span><span style="color:#9cdcfe">_logger</span><span style="color:#cccccc">.</span><span style="color:#dcdcaa">LogDebug</span><span style="color:#179fff">(</span></div><svg class="r" style="left:1036px;top:108px;" width="104" height="560" viewBox="0 0 104 560" fill="none"><rect x="6.0" y="2.4" width="5.2" height="1.6" fill="#c586c0" opacity="0.45"/><rect x="12.0" y="2.4" width="53.0" height="1.6" fill="#4ec9b0" opacity="0.45"/><rect x="6.0" y="4.4" width="5.2" height="1.6" fill="#c586c0" opacity="0.45"/><rect x="12.0" y="4.4" width="44.6" height="1.6" fill="#4ec9b0" opacity="0.45"/><rect x="6.0" y="6.4" width="5.2" height="1.6" fill="#c586c0" opacity="0.45"/><rect x="12.0" y="6.4" width="55.5" height="1.6" fill="#4ec9b0" opacity="0.45"/><rect x="6.0" y="8.4" width="5.2" height="1.6" fill="#c586c0" opacity="0.45"/><rect x="12.0" y="8.4" width="52.0" height="1.6" fill="#4ec9b0" opacity="0.45"/><rect x="6.0" y="10.4" width="5.2" height="1.6" fill="#c586c0" opacity="0.45"/><rect x="12.0" y="10.4" width="41.0" height="1.6" fill="#4ec9b0" opacity="0.45"/><rect x="6.0" y="12.4" width="5.2" height="1.6" fill="#c586c0" opacity="0.45"/><rect x="12.0" y="12.4" width="56.0" height="1.6" fill="#4ec9b0" opacity="0.45"/><rect x="6.0" y="14.4" width="5.2" height="1.6" fill="#c586c0" opacity="0.45"/><rect x="12.0" y="14.4" width="52.0" height="1.6" fill="#4ec9b0" opacity="0.45"/><rect x="6.0" y="16.4" width="5.2" height="1.6" fill="#c586c0" opacity="0.45"/><rect x="12.0" y="16.4" width="52.0" height="1.6" fill="#4ec9b0" opacity="0.45"/><rect x="6.0" y="18.4" width="5.2" height="1.6" fill="#c586c0" opacity="0.45"/><rect x="12.0" y="18.4" width="52.0" height="1.6" fill="#4ec9b0" opacity="0.45"/><rect x="6.0" y="20.4" width="5.2" height="1.6" fill="#c586c0" opacity="0.45"/><rect x="12.0" y="20.4" width="51.6" height="1.6" fill="#4ec9b0" opacity="0.45"/><rect x="6.0" y="22.4" width="5.1" height="1.6" fill="#c586c0" opacity="0.45"/><rect x="12.0" y="22.4" width="31.4" height="1.6" fill="#4ec9b0" opacity="0.45"/><rect x="6.0" y="24.4" width="5.1" height="1.6" fill="#c586c0" opacity="0.45"/><rect x="12.0" y="24.4" width="29.5" height="1.6" fill="#4ec9b0" opacity="0.45"/><rect x="6.0" y="28.4" width="8.9" height="1.6" fill="#569cd6" opacity="0.45"/><rect x="15.9" y="28.4" width="47.6" height="1.6" fill="#4ec9b0" opacity="0.45"/><rect x="6.0" y="32.4" width="5.7" height="1.6" fill="#569cd6" opacity="0.45"/><rect x="13.0" y="32.4" width="4.9" height="1.6" fill="#569cd6" opacity="0.45"/><rect x="19.2" y="32.4" width="16.2" height="1.6" fill="#4ec9b0" opacity="0.45"/><rect x="10.1" y="34.4" width="17.8" height="1.6" fill="#4ec9b0" opacity="0.45"/><rect x="29.2" y="34.4" width="16.9" height="1.6" fill="#9cdcfe" opacity="0.45"/><rect x="10.1" y="36.4" width="20.7" height="1.6" fill="#4ec9b0" opacity="0.45"/><rect x="32.1" y="36.4" width="20.4" height="1.6" fill="#9cdcfe" opacity="0.45"/><rect x="10.1" y="38.4" width="21.7" height="1.6" fill="#4ec9b0" opacity="0.45"/><rect x="33.1" y="38.4" width="12.0" height="1.6" fill="#9cdcfe" opacity="0.45"/><rect x="10.1" y="40.4" width="17.8" height="1.6" fill="#4ec9b0" opacity="0.45"/><rect x="28.9" y="40.4" width="17.8" height="1.6" fill="#9cdcfe" opacity="0.45"/><rect x="10.1" y="42.4" width="15.9" height="1.6" fill="#4ec9b0" opacity="0.45"/><rect x="26.9" y="42.4" width="14.9" height="1.6" fill="#9cdcfe" opacity="0.45"/><rect x="10.1" y="44.4" width="24.3" height="1.6" fill="#4ec9b0" opacity="0.45"/><rect x="35.7" y="44.4" width="5.2" height="1.6" fill="#9cdcfe" opacity="0.45"/><rect x="10.1" y="46.4" width="24.6" height="1.6" fill="#4ec9b0" opacity="0.45"/><rect x="36.0" y="46.4" width="19.1" height="1.6" fill="#9cdcfe" opacity="0.45"/><rect x="6.0" y="48.4" width="1.2" height="1.6" fill="#cccccc" opacity="0.45"/><rect x="10.1" y="50.4" width="1.0" height="1.6" fill="#cccccc" opacity="0.45"/><rect x="12.0" y="50.4" width="16.5" height="1.6" fill="#4ec9b0" opacity="0.45"/><rect x="14.0" y="52.4" width="16.9" height="1.6" fill="#4ec9b0" opacity="0.45"/><rect x="14.0" y="54.4" width="20.4" height="1.6" fill="#4ec9b0" opacity="0.45"/><rect x="14.0" y="56.4" width="12.0" height="1.6" fill="#4ec9b0" opacity="0.45"/><rect x="14.0" y="58.4" width="17.5" height="1.6" fill="#4ec9b0" opacity="0.45"/><rect x="14.0" y="60.4" width="15.2" height="1.6" fill="#4ec9b0" opacity="0.45"/><rect x="14.0" y="62.4" width="5.8" height="1.6" fill="#4ec9b0" opacity="0.45"/><rect x="10.1" y="64.4" width="1.6" height="1.6" fill="#cccccc" opacity="0.45"/><rect x="14.0" y="66.4" width="16.9" height="1.6" fill="#4ec9b0" opacity="0.45"/><rect x="6.0" y="68.4" width="1.2" height="1.6" fill="#cccccc" opacity="0.45"/><rect x="10.1" y="70.4" width="6.8" height="1.6" fill="#569cd6" opacity="0.45"/><rect x="18.2" y="70.4" width="7.8" height="1.6" fill="#569cd6" opacity="0.45"/><rect x="26.9" y="70.4" width="25.0" height="1.6" fill="#4ec9b0" opacity="0.45"/><rect x="53.2" y="70.4" width="19.8" height="1.6" fill="#9cdcfe" opacity="0.45"/><rect x="74.2" y="70.4" width="0.8" height="1.6" fill="#cccccc" opacity="0.45"/><rect x="75.9" y="70.4" width="19.8" height="1.6" fill="#9cdcfe" opacity="0.45"/><rect x="10.1" y="74.4" width="5.8" height="1.6" fill="#569cd6" opacity="0.45"/><rect x="16.9" y="74.4" width="3.9" height="1.6" fill="#4ec9b0" opacity="0.45"/><rect x="21.7" y="74.4" width="5.8" height="1.6" fill="#4ec9b0" opacity="0.45"/><rect x="28.9" y="74.4" width="10.0" height="1.6" fill="#dcdcaa" opacity="0.45"/><rect x="14.0" y="76.4" width="2.9" height="1.6" fill="#569cd6" opacity="0.45"/><rect x="18.2" y="76.4" width="8.7" height="1.6" fill="#9cdcfe" opacity="0.45"/><rect x="14.0" y="78.4" width="2.9" height="1.6" fill="#569cd6" opacity="0.45"/><rect x="18.2" y="78.4" width="12.3" height="1.6" fill="#9cdcfe" opacity="0.45"/><rect x="14.0" y="80.4" width="6.8" height="1.6" fill="#569cd6" opacity="0.45"/><rect x="22.1" y="80.4" width="6.2" height="1.6" fill="#9cdcfe" opacity="0.45"/><rect x="14.0" y="82.4" width="2.9" height="1.6" fill="#569cd6" opacity="0.45"/><rect x="18.2" y="82.4" width="7.8" height="1.6" fill="#9cdcfe" opacity="0.45"/><rect x="14.0" y="84.4" width="6.8" height="1.6" fill="#569cd6" opacity="0.45"/><rect x="22.1" y="84.4" width="4.9" height="1.6" fill="#9cdcfe" opacity="0.45"/><rect x="10.1" y="86.4" width="3.9" height="1.6" fill="#cccccc" opacity="0.45"/><rect x="14.0" y="88.4" width="21.4" height="1.6" fill="#dcdcaa" opacity="0.45"/><rect x="35.7" y="88.4" width="68.4" height="1.6" fill="#9cdcfe" opacity="0.45"/><rect x="10.1" y="92.4" width="5.8" height="1.6" fill="#569cd6" opacity="0.45"/><rect x="16.9" y="92.4" width="3.9" height="1.6" fill="#4ec9b0" opacity="0.45"/><rect x="21.7" y="92.4" width="5.8" height="1.6" fill="#4ec9b0" opacity="0.45"/><rect x="28.9" y="92.4" width="11.0" height="1.6" fill="#dcdcaa" opacity="0.45"/><rect x="14.0" y="94.4" width="2.9" height="1.6" fill="#569cd6" opacity="0.45"/><rect x="18.2" y="94.4" width="8.7" height="1.6" fill="#9cdcfe" opacity="0.45"/><rect x="14.0" y="96.4" width="2.9" height="1.6" fill="#569cd6" opacity="0.45"/><rect x="18.2" y="96.4" width="12.3" height="1.6" fill="#9cdcfe" opacity="0.45"/><rect x="14.0" y="98.4" width="6.8" height="1.6" fill="#569cd6" opacity="0.45"/><rect x="22.1" y="98.4" width="6.2" height="1.6" fill="#9cdcfe" opacity="0.45"/><rect x="14.0" y="100.4" width="2.9" height="1.6" fill="#569cd6" opacity="0.45"/><rect x="18.2" y="100.4" width="7.8" height="1.6" fill="#9cdcfe" opacity="0.45"/><rect x="14.0" y="102.4" width="6.8" height="1.6" fill="#569cd6" opacity="0.45"/><rect x="22.1" y="102.4" width="4.9" height="1.6" fill="#9cdcfe" opacity="0.45"/><rect x="10.1" y="104.4" width="3.9" height="1.6" fill="#cccccc" opacity="0.45"/><rect x="14.0" y="106.4" width="21.7" height="1.6" fill="#dcdcaa" opacity="0.45"/><rect x="18.2" y="108.4" width="8.7" height="1.6" fill="#9cdcfe" opacity="0.45"/><rect x="18.2" y="110.4" width="12.3" height="1.6" fill="#9cdcfe" opacity="0.45"/><rect x="18.2" y="112.4" width="5.8" height="1.6" fill="#9cdcfe" opacity="0.45"/><rect x="18.2" y="114.4" width="8.4" height="1.6" fill="#9cdcfe" opacity="0.45"/><rect x="18.2" y="116.4" width="5.2" height="1.6" fill="#9cdcfe" opacity="0.45"/><rect x="18.2" y="118.4" width="18.8" height="1.6" fill="#9cdcfe" opacity="0.45"/><rect x="14.0" y="120.4" width="1.9" height="1.6" fill="#cccccc" opacity="0.45"/><rect x="10.1" y="124.4" width="5.8" height="1.6" fill="#569cd6" opacity="0.45"/><rect x="16.9" y="124.4" width="4.9" height="1.6" fill="#569cd6" opacity="0.45"/><rect x="23.0" y="124.4" width="3.9" height="1.6" fill="#4ec9b0" opacity="0.45"/><rect x="27.9" y="124.4" width="31.8" height="1.6" fill="#dcdcaa" opacity="0.45"/><rect x="10.1" y="126.4" width="1.0" height="1.6" fill="#cccccc" opacity="0.45"/><rect x="14.0" y="128.4" width="7.1" height="1.6" fill="#9cdcfe" opacity="0.45"/><rect x="21.7" y="128.4" width="15.2" height="1.6" fill="#dcdcaa" opacity="0.45"/><rect x="37.6" y="128.4" width="27.2" height="1.6" fill="#ce9178" opacity="0.45"/><rect x="65.2" y="128.4" width="1.6" height="1.6" fill="#cccccc" opacity="0.45"/><rect x="14.0" y="132.4" width="5.2" height="1.6" fill="#569cd6" opacity="0.45"/><rect x="19.8" y="132.4" width="16.2" height="1.6" fill="#9cdcfe" opacity="0.45"/><rect x="37.0" y="132.4" width="18.8" height="1.6" fill="#dcdcaa" opacity="0.45"/><rect x="14.0" y="134.4" width="5.2" height="1.6" fill="#569cd6" opacity="0.45"/><rect x="20.1" y="134.4" width="20.7" height="1.6" fill="#dcdcaa" opacity="0.45"/><rect x="14.0" y="136.4" width="5.2" height="1.6" fill="#569cd6" opacity="0.45"/><rect x="19.8" y="136.4" width="16.2" height="1.6" fill="#9cdcfe" opacity="0.45"/><rect x="37.0" y="136.4" width="13.9" height="1.6" fill="#dcdcaa" opacity="0.45"/><rect x="14.0" y="140.4" width="2.9" height="1.6" fill="#569cd6" opacity="0.45"/><rect x="18.2" y="140.4" width="9.7" height="1.6" fill="#9cdcfe" opacity="0.45"/><rect x="29.2" y="140.4" width="1.3" height="1.6" fill="#cccccc" opacity="0.45"/><rect x="31.1" y="140.4" width="5.2" height="1.6" fill="#569cd6" opacity="0.45"/><rect x="37.3" y="140.4" width="15.9" height="1.6" fill="#9cdcfe" opacity="0.45"/><rect x="19.0" y="142.4" width="13.8" height="1.6" fill="#dcdcaa" opacity="0.45"/><rect x="19.0" y="144.4" width="25.8" height="1.6" fill="#9cdcfe" opacity="0.45"/><rect x="19.0" y="146.4" width="13.8" height="1.6" fill="#dcdcaa" opacity="0.45"/><rect x="14.0" y="148.4" width="2.9" height="1.6" fill="#569cd6" opacity="0.45"/><rect x="18.2" y="148.4" width="10.7" height="1.6" fill="#9cdcfe" opacity="0.45"/><rect x="29.8" y="148.4" width="1.0" height="1.6" fill="#cccccc" opacity="0.45"/><rect x="32.1" y="148.4" width="5.2" height="1.6" fill="#569cd6" opacity="0.45"/><rect x="38.3" y="148.4" width="20.7" height="1.6" fill="#9cdcfe" opacity="0.45"/><rect x="19.0" y="150.4" width="19.0" height="1.6" fill="#dcdcaa" opacity="0.45"/><rect x="19.0" y="152.4" width="18.0" height="1.6" fill="#dcdcaa" opacity="0.45"/><rect x="38.3" y="152.4" width="17.5" height="1.6" fill="#9cdcfe" opacity="0.45"/><rect x="14.0" y="154.4" width="2.9" height="1.6" fill="#569cd6" opacity="0.45"/><rect x="18.2" y="154.4" width="6.5" height="1.6" fill="#9cdcfe" opacity="0.45"/><rect x="27.9" y="154.4" width="5.2" height="1.6" fill="#569cd6" opacity="0.45"/><rect x="34.1" y="154.4" width="13.3" height="1.6" fill="#9cdcfe" opacity="0.45"/><rect x="48.0" y="154.4" width="16.2" height="1.6" fill="#dcdcaa" opacity="0.45"/><rect x="66.8" y="154.4" width="13.0" height="1.6" fill="#9cdcfe" opacity="0.45"/><rect x="18.2" y="156.4" width="5.8" height="1.6" fill="#9cdcfe" opacity="0.45"/><rect x="25.0" y="156.4" width="12.6" height="1.6" fill="#9cdcfe" opacity="0.45"/><rect x="18.2" y="158.4" width="5.8" height="1.6" fill="#9cdcfe" opacity="0.45"/><rect x="14.0" y="160.4" width="1.9" height="1.6" fill="#cccccc" opacity="0.45"/><rect x="14.0" y="162.4" width="2.9" height="1.6" fill="#569cd6" opacity="0.45"/><rect x="18.2" y="162.4" width="7.8" height="1.6" fill="#9cdcfe" opacity="0.45"/><rect x="26.9" y="162.4" width="1.0" height="1.6" fill="#cccccc" opacity="0.45"/><rect x="28.9" y="162.4" width="5.2" height="1.6" fill="#569cd6" opacity="0.45"/><rect x="35.0" y="162.4" width="18.1" height="1.6" fill="#9cdcfe" opacity="0.45"/><rect x="53.8" y="162.4" width="12.3" height="1.6" fill="#dcdcaa" opacity="0.45"/><rect x="68.4" y="162.4" width="18.5" height="1.6" fill="#dcdcaa" opacity="0.45"/><rect x="87.9" y="162.4" width="16.2" height="1.6" fill="#9cdcfe" opacity="0.45"/><rect x="14.0" y="166.4" width="7.1" height="1.6" fill="#c586c0" opacity="0.45"/><rect x="22.1" y="166.4" width="3.6" height="1.6" fill="#569cd6" opacity="0.45"/><rect x="26.9" y="166.4" width="9.1" height="1.6" fill="#9cdcfe" opacity="0.45"/><rect x="37.0" y="166.4" width="1.9" height="1.6" fill="#c586c0" opacity="0.45"/><rect x="39.9" y="166.4" width="11.0" height="1.6" fill="#9cdcfe" opacity="0.45"/><rect x="14.0" y="168.4" width="1.0" height="1.6" fill="#cccccc" opacity="0.45"/><rect x="18.2" y="170.4" width="6.8" height="1.6" fill="#9cdcfe" opacity="0.45"/><rect x="25.6" y="170.4" width="9.1" height="1.6" fill="#dcdcaa" opacity="0.45"/><rect x="35.4" y="170.4" width="37.3" height="1.6" fill="#ce9178" opacity="0.45"/><rect x="73.3" y="170.4" width="0.8" height="1.6" fill="#cccccc" opacity="0.45"/><rect x="74.9" y="170.4" width="13.9" height="1.6" fill="#9cdcfe" opacity="0.45"/><rect x="18.2" y="174.4" width="2.6" height="1.6" fill="#569cd6" opacity="0.45"/><rect x="22.1" y="174.4" width="10.4" height="1.6" fill="#9cdcfe" opacity="0.45"/><rect x="33.1" y="174.4" width="0.8" height="1.6" fill="#cccccc" opacity="0.45"/><rect x="35.0" y="174.4" width="11.7" height="1.6" fill="#9cdcfe" opacity="0.45"/><rect x="46.7" y="174.4" width="24.0" height="1.6" fill="#dcdcaa" opacity="0.45"/><rect x="18.2" y="176.4" width="2.6" height="1.6" fill="#569cd6" opacity="0.45"/><rect x="22.1" y="176.4" width="6.5" height="1.6" fill="#9cdcfe" opacity="0.45"/><rect x="29.8" y="176.4" width="21.4" height="1.6" fill="#9cdcfe" opacity="0.45"/><rect x="18.2" y="178.4" width="2.6" height="1.6" fill="#569cd6" opacity="0.45"/><rect x="22.1" y="178.4" width="7.1" height="1.6" fill="#9cdcfe" opacity="0.45"/><rect x="30.5" y="178.4" width="20.7" height="1.6" fill="#9cdcfe" opacity="0.45"/><rect x="51.9" y="178.4" width="11.0" height="1.6" fill="#9cdcfe" opacity="0.45"/><rect x="18.2" y="180.4" width="1.9" height="1.6" fill="#c586c0" opacity="0.45"/><rect x="21.1" y="180.4" width="1.0" height="1.6" fill="#cccccc" opacity="0.45"/><rect x="22.1" y="182.4" width="9.1" height="1.6" fill="#9cdcfe" opacity="0.45"/><rect x="31.8" y="182.4" width="9.1" height="1.6" fill="#9cdcfe" opacity="0.45"/><rect x="41.8" y="182.4" width="7.1" height="1.6" fill="#dcdcaa" opacity="0.45"/><rect x="26.1" y="184.4" width="5.7" height="1.6" fill="#569cd6" opacity="0.45"/><rect x="32.4" y="184.4" width="20.1" height="1.6" fill="#9cdcfe" opacity="0.45"/><rect x="26.1" y="186.4" width="33.9" height="1.6" fill="#9cdcfe" opacity="0.45"/><rect x="22.1" y="188.4" width="1.0" height="1.6" fill="#cccccc" opacity="0.45"/><rect x="18.2" y="190.4" width="1.0" height="1.6" fill="#cccccc" opacity="0.45"/><rect x="18.2" y="192.4" width="1.0" height="1.6" fill="#cccccc" opacity="0.45"/><rect x="22.1" y="194.4" width="4.9" height="1.6" fill="#569cd6" opacity="0.45"/><rect x="27.9" y="194.4" width="14.6" height="1.6" fill="#dcdcaa" opacity="0.45"/><rect x="42.8" y="194.4" width="39.2" height="1.6" fill="#9cdcfe" opacity="0.45"/><rect x="18.2" y="196.4" width="1.0" height="1.6" fill="#cccccc" opacity="0.45"/><rect x="18.2" y="198.4" width="3.9" height="1.6" fill="#c586c0" opacity="0.45"/><rect x="23.0" y="198.4" width="1.9" height="1.6" fill="#c586c0" opacity="0.45"/><rect x="26.0" y="198.4" width="1.0" height="1.6" fill="#cccccc" opacity="0.45"/><rect x="22.1" y="200.4" width="9.1" height="1.6" fill="#9cdcfe" opacity="0.45"/><rect x="31.8" y="200.4" width="9.1" height="1.6" fill="#9cdcfe" opacity="0.45"/><rect x="41.8" y="200.4" width="7.1" height="1.6" fill="#dcdcaa" opacity="0.45"/><rect x="26.1" y="202.4" width="5.7" height="1.6" fill="#569cd6" opacity="0.45"/><rect x="32.4" y="202.4" width="20.7" height="1.6" fill="#9cdcfe" opacity="0.45"/><rect x="26.1" y="204.4" width="33.9" height="1.6" fill="#9cdcfe" opacity="0.45"/><rect x="22.1" y="206.4" width="1.0" height="1.6" fill="#cccccc" opacity="0.45"/><rect x="18.2" y="208.4" width="1.0" height="1.6" fill="#cccccc" opacity="0.45"/><rect x="18.2" y="210.4" width="1.0" height="1.6" fill="#cccccc" opacity="0.45"/><rect x="22.1" y="212.4" width="4.9" height="1.6" fill="#569cd6" opacity="0.45"/><rect x="27.9" y="212.4" width="15.6" height="1.6" fill="#dcdcaa" opacity="0.45"/><rect x="44.1" y="212.4" width="38.9" height="1.6" fill="#9cdcfe" opacity="0.45"/><rect x="18.2" y="214.4" width="1.0" height="1.6" fill="#cccccc" opacity="0.45"/><rect x="18.2" y="216.4" width="3.9" height="1.6" fill="#c586c0" opacity="0.45"/><rect x="18.2" y="218.4" width="1.0" height="1.6" fill="#cccccc" opacity="0.45"/><rect x="22.1" y="220.4" width="10.7" height="1.6" fill="#dcdcaa" opacity="0.45"/><rect x="26.1" y="222.4" width="9.3" height="1.6" fill="#9cdcfe" opacity="0.45"/><rect x="26.1" y="224.4" width="55.6" height="1.6" fill="#ce9178" opacity="0.45"/><rect x="26.1" y="226.4" width="4.7" height="1.6" fill="#569cd6" opacity="0.45"/><rect x="22.1" y="228.4" width="1.3" height="1.6" fill="#cccccc" opacity="0.45"/><rect x="18.2" y="230.4" width="1.0" height="1.6" fill="#cccccc" opacity="0.45"/><rect x="18.2" y="232.4" width="4.9" height="1.6" fill="#569cd6" opacity="0.45"/><rect x="24.0" y="232.4" width="16.2" height="1.6" fill="#9cdcfe" opacity="0.45"/><rect x="40.9" y="232.4" width="11.7" height="1.6" fill="#dcdcaa" opacity="0.45"/><rect x="53.2" y="232.4" width="1.6" height="1.6" fill="#cccccc" opacity="0.45"/><rect x="14.0" y="234.4" width="1.0" height="1.6" fill="#cccccc" opacity="0.45"/><rect x="14.0" y="238.4" width="4.9" height="1.6" fill="#569cd6" opacity="0.45"/><rect x="20.1" y="238.4" width="20.7" height="1.6" fill="#dcdcaa" opacity="0.45"/><rect x="41.5" y="238.4" width="2.3" height="1.6" fill="#cccccc" opacity="0.45"/><rect x="10.1" y="240.4" width="1.0" height="1.6" fill="#cccccc" opacity="0.45"/><rect x="10.1" y="244.4" width="6.8" height="1.6" fill="#569cd6" opacity="0.45"/><rect x="18.2" y="244.4" width="4.9" height="1.6" fill="#569cd6" opacity="0.45"/><rect x="24.0" y="244.4" width="3.9" height="1.6" fill="#4ec9b0" opacity="0.45"/><rect x="28.9" y="244.4" width="14.9" height="1.6" fill="#dcdcaa" opacity="0.45"/><rect x="14.0" y="246.4" width="5.2" height="1.6" fill="#4ec9b0" opacity="0.45"/><rect x="20.1" y="246.4" width="4.9" height="1.6" fill="#9cdcfe" opacity="0.45"/><rect x="14.0" y="248.4" width="10.0" height="1.6" fill="#4ec9b0" opacity="0.45"/><rect x="25.0" y="248.4" width="10.7" height="1.6" fill="#9cdcfe" opacity="0.45"/><rect x="14.0" y="250.4" width="5.2" height="1.6" fill="#4ec9b0" opacity="0.45"/><rect x="20.1" y="250.4" width="4.9" height="1.6" fill="#9cdcfe" opacity="0.45"/><rect x="14.0" y="252.4" width="7.1" height="1.6" fill="#4ec9b0" opacity="0.45"/><rect x="22.1" y="252.4" width="6.8" height="1.6" fill="#9cdcfe" opacity="0.45"/><rect x="10.1" y="254.4" width="1.0" height="1.6" fill="#cccccc" opacity="0.45"/><rect x="10.1" y="256.4" width="1.0" height="1.6" fill="#cccccc" opacity="0.45"/><rect x="14.0" y="258.4" width="1.9" height="1.6" fill="#c586c0" opacity="0.45"/><rect x="17.2" y="258.4" width="5.8" height="1.6" fill="#9cdcfe" opacity="0.45"/><rect x="24.0" y="258.4" width="10.0" height="1.6" fill="#9cdcfe" opacity="0.45"/><rect x="35.0" y="258.4" width="1.0" height="1.6" fill="#cccccc" opacity="0.45"/><rect x="37.0" y="258.4" width="9.7" height="1.6" fill="#9cdcfe" opacity="0.45"/><rect x="18.2" y="260.4" width="6.5" height="1.6" fill="#c586c0" opacity="0.45"/><rect x="14.0" y="264.4" width="2.9" height="1.6" fill="#569cd6" opacity="0.45"/><rect x="18.2" y="264.4" width="6.8" height="1.6" fill="#9cdcfe" opacity="0.45"/><rect x="26.0" y="264.4" width="1.9" height="1.6" fill="#cccccc" opacity="0.45"/><rect x="28.9" y="264.4" width="5.2" height="1.6" fill="#569cd6" opacity="0.45"/><rect x="35.0" y="264.4" width="18.1" height="1.6" fill="#9cdcfe" opacity="0.45"/><rect x="53.8" y="264.4" width="19.4" height="1.6" fill="#dcdcaa" opacity="0.45"/><rect x="73.9" y="264.4" width="18.8" height="1.6" fill="#9cdcfe" opacity="0.45"/><rect x="14.0" y="266.4" width="2.9" height="1.6" fill="#569cd6" opacity="0.45"/><rect x="18.2" y="266.4" width="5.5" height="1.6" fill="#9cdcfe" opacity="0.45"/><rect x="24.7" y="266.4" width="0.8" height="1.6" fill="#cccccc" opacity="0.45"/><rect x="26.0" y="266.4" width="4.5" height="1.6" fill="#9cdcfe" opacity="0.45"/><rect x="31.5" y="266.4" width="27.2" height="1.6" fill="#9cdcfe" opacity="0.45"/><rect x="14.0" y="268.4" width="2.9" height="1.6" fill="#569cd6" opacity="0.45"/><rect x="18.2" y="268.4" width="9.1" height="1.6" fill="#9cdcfe" opacity="0.45"/><rect x="28.6" y="268.4" width="20.1" height="1.6" fill="#9cdcfe" opacity="0.45"/><rect x="14.0" y="270.4" width="1.9" height="1.6" fill="#c586c0" opacity="0.45"/><rect x="17.2" y="270.4" width="10.0" height="1.6" fill="#9cdcfe" opacity="0.45"/><rect x="28.6" y="270.4" width="15.6" height="1.6" fill="#9cdcfe" opacity="0.45"/><rect x="14.0" y="272.4" width="1.0" height="1.6" fill="#cccccc" opacity="0.45"/><rect x="18.2" y="274.4" width="10.0" height="1.6" fill="#dcdcaa" opacity="0.45"/><rect x="28.6" y="274.4" width="5.8" height="1.6" fill="#9cdcfe" opacity="0.45"/><rect x="36.3" y="274.4" width="47.3" height="1.6" fill="#ce9178" opacity="0.45"/><rect x="84.9" y="274.4" width="7.1" height="1.6" fill="#569cd6" opacity="0.45"/><rect x="18.2" y="276.4" width="6.5" height="1.6" fill="#c586c0" opacity="0.45"/><rect x="14.0" y="278.4" width="1.0" height="1.6" fill="#cccccc" opacity="0.45"/><rect x="14.0" y="280.4" width="5.2" height="1.6" fill="#569cd6" opacity="0.45"/><rect x="20.1" y="280.4" width="13.6" height="1.6" fill="#dcdcaa" opacity="0.45"/><rect x="34.4" y="280.4" width="47.3" height="1.6" fill="#9cdcfe" opacity="0.45"/><rect x="14.0" y="282.4" width="5.2" height="1.6" fill="#569cd6" opacity="0.45"/><rect x="20.1" y="282.4" width="21.4" height="1.6" fill="#dcdcaa" opacity="0.45"/><rect x="42.2" y="282.4" width="47.6" height="1.6" fill="#9cdcfe" opacity="0.45"/><rect x="14.0" y="286.4" width="10.7" height="1.6" fill="#dcdcaa" opacity="0.45"/><rect x="25.0" y="286.4" width="5.5" height="1.6" fill="#9cdcfe" opacity="0.45"/><rect x="32.4" y="286.4" width="31.1" height="1.6" fill="#ce9178" opacity="0.45"/><rect x="65.8" y="286.4" width="6.2" height="1.6" fill="#569cd6" opacity="0.45"/><rect x="10.1" y="288.4" width="1.0" height="1.6" fill="#cccccc" opacity="0.45"/><rect x="10.1" y="292.4" width="6.8" height="1.6" fill="#569cd6" opacity="0.45"/><rect x="18.2" y="292.4" width="4.9" height="1.6" fill="#569cd6" opacity="0.45"/><rect x="24.0" y="292.4" width="3.9" height="1.6" fill="#4ec9b0" opacity="0.45"/><rect x="28.9" y="292.4" width="15.9" height="1.6" fill="#dcdcaa" opacity="0.45"/><rect x="14.0" y="294.4" width="5.2" height="1.6" fill="#4ec9b0" opacity="0.45"/><rect x="20.1" y="294.4" width="4.9" height="1.6" fill="#9cdcfe" opacity="0.45"/><rect x="14.0" y="296.4" width="10.0" height="1.6" fill="#4ec9b0" opacity="0.45"/><rect x="25.0" y="296.4" width="10.7" height="1.6" fill="#9cdcfe" opacity="0.45"/><rect x="14.0" y="298.4" width="5.2" height="1.6" fill="#4ec9b0" opacity="0.45"/><rect x="20.1" y="298.4" width="4.9" height="1.6" fill="#9cdcfe" opacity="0.45"/><rect x="14.0" y="300.4" width="7.1" height="1.6" fill="#4ec9b0" opacity="0.45"/><rect x="22.1" y="300.4" width="6.8" height="1.6" fill="#9cdcfe" opacity="0.45"/><rect x="10.1" y="302.4" width="1.0" height="1.6" fill="#cccccc" opacity="0.45"/><rect x="10.1" y="304.4" width="1.0" height="1.6" fill="#cccccc" opacity="0.45"/><rect x="14.0" y="306.4" width="1.9" height="1.6" fill="#c586c0" opacity="0.45"/><rect x="17.2" y="306.4" width="5.8" height="1.6" fill="#9cdcfe" opacity="0.45"/><rect x="24.0" y="306.4" width="10.0" height="1.6" fill="#9cdcfe" opacity="0.45"/><rect x="35.0" y="306.4" width="1.0" height="1.6" fill="#cccccc" opacity="0.45"/><rect x="37.0" y="306.4" width="11.0" height="1.6" fill="#9cdcfe" opacity="0.45"/><rect x="18.2" y="308.4" width="6.5" height="1.6" fill="#c586c0" opacity="0.45"/><rect x="14.0" y="312.4" width="2.9" height="1.6" fill="#569cd6" opacity="0.45"/><rect x="18.2" y="312.4" width="14.9" height="1.6" fill="#9cdcfe" opacity="0.45"/><rect x="34.1" y="312.4" width="1.0" height="1.6" fill="#cccccc" opacity="0.45"/><rect x="36.0" y="312.4" width="4.9" height="1.6" fill="#569cd6" opacity="0.45"/><rect x="41.8" y="312.4" width="21.1" height="1.6" fill="#9cdcfe" opacity="0.45"/><rect x="63.9" y="312.4" width="19.1" height="1.6" fill="#dcdcaa" opacity="0.45"/><rect x="18.2" y="314.4" width="15.6" height="1.6" fill="#9cdcfe" opacity="0.45"/><rect x="18.2" y="316.4" width="13.0" height="1.6" fill="#9cdcfe" opacity="0.45"/><rect x="14.0" y="318.4" width="1.9" height="1.6" fill="#cccccc" opacity="0.45"/><rect x="14.0" y="320.4" width="1.9" height="1.6" fill="#c586c0" opacity="0.45"/><rect x="17.2" y="320.4" width="15.9" height="1.6" fill="#9cdcfe" opacity="0.45"/><rect x="34.1" y="320.4" width="1.0" height="1.6" fill="#cccccc" opacity="0.45"/><rect x="37.0" y="320.4" width="3.9" height="1.6" fill="#569cd6" opacity="0.45"/><rect x="42.2" y="320.4" width="1.3" height="1.6" fill="#cccccc" opacity="0.45"/><rect x="44.8" y="320.4" width="42.1" height="1.6" fill="#9cdcfe" opacity="0.45"/><rect x="14.0" y="322.4" width="1.0" height="1.6" fill="#cccccc" opacity="0.45"/><rect x="18.2" y="324.4" width="10.0" height="1.6" fill="#dcdcaa" opacity="0.45"/><rect x="28.6" y="324.4" width="5.8" height="1.6" fill="#9cdcfe" opacity="0.45"/><rect x="36.3" y="324.4" width="42.1" height="1.6" fill="#ce9178" opacity="0.45"/><rect x="79.8" y="324.4" width="7.1" height="1.6" fill="#569cd6" opacity="0.45"/><rect x="18.2" y="326.4" width="6.5" height="1.6" fill="#c586c0" opacity="0.45"/><rect x="14.0" y="328.4" width="1.0" height="1.6" fill="#cccccc" opacity="0.45"/><rect x="14.0" y="330.4" width="2.9" height="1.6" fill="#569cd6" opacity="0.45"/><rect x="18.2" y="330.4" width="6.8" height="1.6" fill="#9cdcfe" opacity="0.45"/><rect x="26.0" y="330.4" width="1.9" height="1.6" fill="#cccccc" opacity="0.45"/><rect x="28.9" y="330.4" width="5.2" height="1.6" fill="#569cd6" opacity="0.45"/><rect x="35.0" y="330.4" width="18.1" height="1.6" fill="#9cdcfe" opacity="0.45"/><rect x="53.8" y="330.4" width="19.4" height="1.6" fill="#dcdcaa" opacity="0.45"/><rect x="73.9" y="330.4" width="18.8" height="1.6" fill="#9cdcfe" opacity="0.45"/><rect x="14.0" y="332.4" width="2.9" height="1.6" fill="#569cd6" opacity="0.45"/><rect x="18.2" y="332.4" width="5.8" height="1.6" fill="#9cdcfe" opacity="0.45"/><rect x="25.0" y="332.4" width="1.6" height="1.6" fill="#cccccc" opacity="0.45"/><rect x="26.9" y="332.4" width="5.5" height="1.6" fill="#9cdcfe" opacity="0.45"/><rect x="33.1" y="332.4" width="27.2" height="1.6" fill="#9cdcfe" opacity="0.45"/><rect x="14.0" y="334.4" width="5.2" height="1.6" fill="#569cd6" opacity="0.45"/><rect x="20.1" y="334.4" width="13.0" height="1.6" fill="#dcdcaa" opacity="0.45"/><rect x="33.7" y="334.4" width="51.2" height="1.6" fill="#9cdcfe" opacity="0.45"/><rect x="14.0" y="336.4" width="21.7" height="1.6" fill="#dcdcaa" opacity="0.45"/><rect x="36.0" y="336.4" width="34.0" height="1.6" fill="#9cdcfe" opacity="0.45"/><rect x="14.0" y="340.4" width="10.7" height="1.6" fill="#dcdcaa" opacity="0.45"/><rect x="25.0" y="340.4" width="5.5" height="1.6" fill="#9cdcfe" opacity="0.45"/><rect x="32.4" y="340.4" width="31.8" height="1.6" fill="#ce9178" opacity="0.45"/><rect x="66.8" y="340.4" width="6.2" height="1.6" fill="#569cd6" opacity="0.45"/><rect x="10.1" y="342.4" width="1.0" height="1.6" fill="#cccccc" opacity="0.45"/><rect x="10.1" y="346.4" width="6.8" height="1.6" fill="#569cd6" opacity="0.45"/><rect x="18.2" y="346.4" width="4.9" height="1.6" fill="#569cd6" opacity="0.45"/><rect x="24.0" y="346.4" width="10.4" height="1.6" fill="#4ec9b0" opacity="0.45"/><rect x="35.7" y="346.4" width="22.4" height="1.6" fill="#dcdcaa" opacity="0.45"/><rect x="14.0" y="348.4" width="2.9" height="1.6" fill="#569cd6" opacity="0.45"/><rect x="18.2" y="348.4" width="8.7" height="1.6" fill="#9cdcfe" opacity="0.45"/><rect x="14.0" y="350.4" width="2.9" height="1.6" fill="#569cd6" opacity="0.45"/><rect x="18.2" y="350.4" width="12.3" height="1.6" fill="#9cdcfe" opacity="0.45"/><rect x="14.0" y="352.4" width="6.8" height="1.6" fill="#569cd6" opacity="0.45"/><rect x="22.1" y="352.4" width="6.2" height="1.6" fill="#9cdcfe" opacity="0.45"/><rect x="14.0" y="354.4" width="2.9" height="1.6" fill="#569cd6" opacity="0.45"/><rect x="18.2" y="354.4" width="7.8" height="1.6" fill="#9cdcfe" opacity="0.45"/><rect x="14.0" y="356.4" width="6.8" height="1.6" fill="#569cd6" opacity="0.45"/><rect x="22.1" y="356.4" width="4.9" height="1.6" fill="#9cdcfe" opacity="0.45"/><rect x="14.0" y="358.4" width="9.7" height="1.6" fill="#4ec9b0" opacity="0.45"/><rect x="25.0" y="358.4" width="3.9" height="1.6" fill="#9cdcfe" opacity="0.45"/><rect x="10.1" y="360.4" width="1.0" height="1.6" fill="#cccccc" opacity="0.45"/><rect x="10.1" y="362.4" width="1.0" height="1.6" fill="#cccccc" opacity="0.45"/><rect x="14.0" y="364.4" width="7.1" height="1.6" fill="#9cdcfe" opacity="0.45"/><rect x="22.1" y="364.4" width="14.9" height="1.6" fill="#dcdcaa" opacity="0.45"/><rect x="18.2" y="366.4" width="85.2" height="1.6" fill="#ce9178" opacity="0.45"/><rect x="22.1" y="368.4" width="61.9" height="1.6" fill="#ce9178" opacity="0.45"/><rect x="18.2" y="370.4" width="3.9" height="1.6" fill="#9cdcfe" opacity="0.45"/><rect x="18.2" y="372.4" width="8.7" height="1.6" fill="#9cdcfe" opacity="0.45"/><rect x="18.2" y="374.4" width="12.3" height="1.6" fill="#9cdcfe" opacity="0.45"/><rect x="18.2" y="376.4" width="5.8" height="1.6" fill="#9cdcfe" opacity="0.45"/><rect x="18.2" y="378.4" width="8.4" height="1.6" fill="#9cdcfe" opacity="0.45"/><rect x="18.2" y="380.4" width="4.9" height="1.6" fill="#9cdcfe" opacity="0.45"/><rect x="14.0" y="382.4" width="1.9" height="1.6" fill="#cccccc" opacity="0.45"/><rect x="14.0" y="386.4" width="13.3" height="1.6" fill="#dcdcaa" opacity="0.45"/><rect x="27.9" y="386.4" width="7.1" height="1.6" fill="#9cdcfe" opacity="0.45"/><rect x="36.0" y="386.4" width="5.5" height="1.6" fill="#9cdcfe" opacity="0.45"/><rect x="42.8" y="386.4" width="9.1" height="1.6" fill="#9cdcfe" opacity="0.45"/><rect x="14.0" y="388.4" width="1.9" height="1.6" fill="#c586c0" opacity="0.45"/><rect x="17.5" y="388.4" width="5.5" height="1.6" fill="#569cd6" opacity="0.45"/><rect x="24.0" y="388.4" width="18.1" height="1.6" fill="#9cdcfe" opacity="0.45"/><rect x="42.8" y="388.4" width="19.4" height="1.6" fill="#dcdcaa" opacity="0.45"/><rect x="62.9" y="388.4" width="9.7" height="1.6" fill="#9cdcfe" opacity="0.45"/><rect x="73.9" y="388.4" width="1.9" height="1.6" fill="#cccccc" opacity="0.45"/><rect x="76.8" y="388.4" width="5.2" height="1.6" fill="#569cd6" opacity="0.45"/><rect x="14.0" y="390.4" width="1.0" height="1.6" fill="#cccccc" opacity="0.45"/><rect x="18.2" y="392.4" width="4.9" height="1.6" fill="#c586c0" opacity="0.45"/><rect x="24.0" y="392.4" width="2.9" height="1.6" fill="#569cd6" opacity="0.45"/><rect x="27.9" y="392.4" width="24.3" height="1.6" fill="#4ec9b0" opacity="0.45"/><rect x="52.9" y="392.4" width="10.4" height="1.6" fill="#9cdcfe" opacity="0.45"/><rect x="14.0" y="394.4" width="1.0" height="1.6" fill="#cccccc" opacity="0.45"/><rect x="14.0" y="396.4" width="1.9" height="1.6" fill="#c586c0" opacity="0.45"/><rect x="17.5" y="396.4" width="5.5" height="1.6" fill="#569cd6" opacity="0.45"/><rect x="24.0" y="396.4" width="21.1" height="1.6" fill="#9cdcfe" opacity="0.45"/><rect x="45.7" y="396.4" width="13.3" height="1.6" fill="#dcdcaa" opacity="0.45"/><rect x="59.7" y="396.4" width="13.0" height="1.6" fill="#9cdcfe" opacity="0.45"/><rect x="73.9" y="396.4" width="1.9" height="1.6" fill="#cccccc" opacity="0.45"/><rect x="76.8" y="396.4" width="5.2" height="1.6" fill="#569cd6" opacity="0.45"/><rect x="14.0" y="398.4" width="1.0" height="1.6" fill="#cccccc" opacity="0.45"/><rect x="18.2" y="400.4" width="4.9" height="1.6" fill="#c586c0" opacity="0.45"/><rect x="24.0" y="400.4" width="2.9" height="1.6" fill="#569cd6" opacity="0.45"/><rect x="27.9" y="400.4" width="27.2" height="1.6" fill="#4ec9b0" opacity="0.45"/><rect x="55.8" y="400.4" width="13.6" height="1.6" fill="#9cdcfe" opacity="0.45"/><rect x="14.0" y="402.4" width="1.0" height="1.6" fill="#cccccc" opacity="0.45"/><rect x="14.0" y="404.4" width="4.9" height="1.6" fill="#569cd6" opacity="0.45"/><rect x="20.1" y="404.4" width="15.6" height="1.6" fill="#9cdcfe" opacity="0.45"/><rect x="37.0" y="404.4" width="16.9" height="1.6" fill="#dcdcaa" opacity="0.45"/><rect x="53.8" y="404.4" width="1.9" height="1.6" fill="#cccccc" opacity="0.45"/><rect x="14.0" y="408.4" width="2.9" height="1.6" fill="#569cd6" opacity="0.45"/><rect x="18.2" y="408.4" width="4.9" height="1.6" fill="#9cdcfe" opacity="0.45"/><rect x="24.0" y="408.4" width="0.8" height="1.6" fill="#cccccc" opacity="0.45"/><rect x="26.0" y="408.4" width="5.2" height="1.6" fill="#9cdcfe" opacity="0.45"/><rect x="31.8" y="408.4" width="9.7" height="1.6" fill="#dcdcaa" opacity="0.45"/><rect x="41.8" y="408.4" width="55.7" height="1.6" fill="#9cdcfe" opacity="0.45"/><rect x="14.0" y="410.4" width="16.5" height="1.6" fill="#9cdcfe" opacity="0.45"/><rect x="31.1" y="410.4" width="7.1" height="1.6" fill="#dcdcaa" opacity="0.45"/><rect x="39.6" y="410.4" width="7.1" height="1.6" fill="#9cdcfe" opacity="0.45"/><rect x="14.0" y="414.4" width="4.9" height="1.6" fill="#569cd6" opacity="0.45"/><rect x="20.1" y="414.4" width="23.3" height="1.6" fill="#dcdcaa" opacity="0.45"/><rect x="14.0" y="418.4" width="5.8" height="1.6" fill="#c586c0" opacity="0.45"/><rect x="21.1" y="418.4" width="5.5" height="1.6" fill="#9cdcfe" opacity="0.45"/><rect x="10.1" y="420.4" width="1.0" height="1.6" fill="#cccccc" opacity="0.45"/><rect x="10.1" y="424.4" width="6.8" height="1.6" fill="#569cd6" opacity="0.45"/><rect x="18.2" y="424.4" width="3.6" height="1.6" fill="#569cd6" opacity="0.45"/><rect x="23.0" y="424.4" width="10.7" height="1.6" fill="#dcdcaa" opacity="0.45"/><rect x="33.7" y="424.4" width="5.2" height="1.6" fill="#4ec9b0" opacity="0.45"/><rect x="39.9" y="424.4" width="5.5" height="1.6" fill="#9cdcfe" opacity="0.45"/><rect x="47.0" y="424.4" width="5.8" height="1.6" fill="#569cd6" opacity="0.45"/><rect x="54.2" y="424.4" width="6.5" height="1.6" fill="#9cdcfe" opacity="0.45"/><rect x="61.9" y="424.4" width="3.9" height="1.6" fill="#569cd6" opacity="0.45"/><rect x="67.1" y="424.4" width="19.8" height="1.6" fill="#9cdcfe" opacity="0.45"/><rect x="10.1" y="426.4" width="1.0" height="1.6" fill="#cccccc" opacity="0.45"/><rect x="14.0" y="428.4" width="7.1" height="1.6" fill="#9cdcfe" opacity="0.45"/><rect x="21.7" y="428.4" width="9.1" height="1.6" fill="#dcdcaa" opacity="0.45"/><rect x="18.2" y="430.4" width="77.8" height="1.6" fill="#ce9178" opacity="0.45"/><rect x="18.2" y="432.4" width="8.7" height="1.6" fill="#9cdcfe" opacity="0.45"/><rect x="18.2" y="434.4" width="5.8" height="1.6" fill="#9cdcfe" opacity="0.45"/><rect x="18.2" y="436.4" width="18.8" height="1.6" fill="#9cdcfe" opacity="0.45"/><rect x="14.0" y="438.4" width="1.9" height="1.6" fill="#cccccc" opacity="0.45"/><rect x="14.0" y="442.4" width="4.5" height="1.6" fill="#9cdcfe" opacity="0.45"/><rect x="19.8" y="442.4" width="5.8" height="1.6" fill="#9cdcfe" opacity="0.45"/><rect x="26.6" y="442.4" width="0.8" height="1.6" fill="#cccccc" opacity="0.45"/><rect x="28.6" y="442.4" width="7.1" height="1.6" fill="#9cdcfe" opacity="0.45"/><rect x="14.0" y="444.4" width="25.0" height="1.6" fill="#9cdcfe" opacity="0.45"/><rect x="40.2" y="444.4" width="0.8" height="1.6" fill="#cccccc" opacity="0.45"/><rect x="41.5" y="444.4" width="20.1" height="1.6" fill="#9cdcfe" opacity="0.45"/><rect x="14.0" y="446.4" width="17.2" height="1.6" fill="#9cdcfe" opacity="0.45"/><rect x="32.4" y="446.4" width="0.8" height="1.6" fill="#cccccc" opacity="0.45"/><rect x="34.1" y="446.4" width="4.2" height="1.6" fill="#569cd6" opacity="0.45"/><rect x="14.0" y="448.4" width="16.5" height="1.6" fill="#9cdcfe" opacity="0.45"/><rect x="31.1" y="448.4" width="11.3" height="1.6" fill="#dcdcaa" opacity="0.45"/><rect x="42.8" y="448.4" width="7.1" height="1.6" fill="#9cdcfe" opacity="0.45"/><rect x="14.0" y="452.4" width="20.1" height="1.6" fill="#9cdcfe" opacity="0.45"/><rect x="35.0" y="452.4" width="13.3" height="1.6" fill="#dcdcaa" opacity="0.45"/><rect x="48.6" y="452.4" width="7.1" height="1.6" fill="#9cdcfe" opacity="0.45"/><rect x="10.1" y="454.4" width="1.0" height="1.6" fill="#cccccc" opacity="0.45"/><rect x="10.1" y="458.4" width="6.8" height="1.6" fill="#569cd6" opacity="0.45"/><rect x="18.2" y="458.4" width="4.9" height="1.6" fill="#569cd6" opacity="0.45"/><rect x="24.0" y="458.4" width="3.9" height="1.6" fill="#4ec9b0" opacity="0.45"/><rect x="28.9" y="458.4" width="20.1" height="1.6" fill="#dcdcaa" opacity="0.45"/><rect x="10.1" y="460.4" width="1.0" height="1.6" fill="#cccccc" opacity="0.45"/><rect x="14.0" y="462.4" width="7.1" height="1.6" fill="#9cdcfe" opacity="0.45"/><rect x="21.7" y="462.4" width="8.7" height="1.6" fill="#dcdcaa" opacity="0.45"/><rect x="31.1" y="462.4" width="29.5" height="1.6" fill="#ce9178" opacity="0.45"/><rect x="14.0" y="466.4" width="59.9" height="1.6" fill="#6a9955" opacity="0.45"/><rect x="14.0" y="468.4" width="2.9" height="1.6" fill="#569cd6" opacity="0.45"/><rect x="18.2" y="468.4" width="13.0" height="1.6" fill="#9cdcfe" opacity="0.45"/><rect x="32.1" y="468.4" width="0.8" height="1.6" fill="#cccccc" opacity="0.45"/><rect x="34.1" y="468.4" width="4.9" height="1.6" fill="#569cd6" opacity="0.45"/><rect x="40.2" y="468.4" width="15.6" height="1.6" fill="#9cdcfe" opacity="0.45"/><rect x="19.0" y="470.4" width="13.8" height="1.6" fill="#dcdcaa" opacity="0.45"/><rect x="19.0" y="472.4" width="13.5" height="1.6" fill="#dcdcaa" opacity="0.45"/><rect x="33.1" y="472.4" width="11.0" height="1.6" fill="#9cdcfe" opacity="0.45"/><rect x="45.1" y="472.4" width="4.2" height="1.6" fill="#cccccc" opacity="0.45"/><rect x="49.9" y="472.0" width="13.9" height="2.4" fill="#5a5a5a"/><rect x="65.2" y="472.4" width="0.8" height="1.6" fill="#cccccc" opacity="0.45"/><rect x="66.8" y="472.4" width="18.8" height="1.6" fill="#9cdcfe" opacity="0.45"/><rect x="19.0" y="474.4" width="13.8" height="1.6" fill="#dcdcaa" opacity="0.45"/><rect x="14.0" y="478.4" width="7.1" height="1.6" fill="#c586c0" opacity="0.45"/><rect x="22.1" y="478.4" width="3.6" height="1.6" fill="#569cd6" opacity="0.45"/><rect x="26.9" y="478.4" width="4.9" height="1.6" fill="#9cdcfe" opacity="0.45"/><rect x="33.1" y="478.4" width="1.9" height="1.6" fill="#c586c0" opacity="0.45"/><rect x="36.0" y="478.4" width="13.9" height="1.6" fill="#9cdcfe" opacity="0.45"/><rect x="14.0" y="480.4" width="1.0" height="1.6" fill="#cccccc" opacity="0.45"/><rect x="18.2" y="482.4" width="10.0" height="1.6" fill="#dcdcaa" opacity="0.45"/><rect x="28.6" y="482.4" width="5.8" height="1.6" fill="#9cdcfe" opacity="0.45"/><rect x="36.3" y="482.4" width="25.3" height="1.6" fill="#ce9178" opacity="0.45"/><rect x="63.9" y="482.4" width="6.8" height="1.6" fill="#569cd6" opacity="0.45"/><rect x="14.0" y="484.4" width="1.0" height="1.6" fill="#cccccc" opacity="0.45"/><rect x="10.1" y="486.4" width="1.0" height="1.6" fill="#cccccc" opacity="0.45"/><rect x="10.0" y="490.4" width="7.0" height="1.6" fill="#569cd6" opacity="0.45"/><rect x="18.0" y="490.4" width="6.0" height="1.6" fill="#569cd6" opacity="0.45"/><rect x="25.0" y="490.4" width="4.0" height="1.6" fill="#569cd6" opacity="0.45"/><rect x="30.0" y="490.4" width="13.0" height="1.6" fill="#dcdcaa" opacity="0.45"/><rect x="44.0" y="490.4" width="7.0" height="1.6" fill="#569cd6" opacity="0.45"/><rect x="52.0" y="490.4" width="7.0" height="1.6" fill="#9cdcfe" opacity="0.45"/><rect x="60.0" y="490.4" width="7.0" height="1.6" fill="#569cd6" opacity="0.45"/><rect x="68.0" y="490.4" width="6.0" height="1.6" fill="#9cdcfe" opacity="0.45"/><rect x="75.0" y="490.4" width="3.0" height="1.6" fill="#569cd6" opacity="0.45"/><rect x="79.0" y="490.4" width="9.0" height="1.6" fill="#9cdcfe" opacity="0.45"/><rect x="10.0" y="492.4" width="1.0" height="1.6" fill="#cccccc" opacity="0.45"/><rect x="14.0" y="494.4" width="2.0" height="1.6" fill="#c586c0" opacity="0.45"/><rect x="17.0" y="494.4" width="7.0" height="1.6" fill="#9cdcfe" opacity="0.45"/><rect x="25.0" y="494.4" width="1.0" height="1.6" fill="#cccccc" opacity="0.45"/><rect x="27.0" y="494.4" width="2.0" height="1.6" fill="#b5cea8" opacity="0.45"/><rect x="14.0" y="496.4" width="1.0" height="1.6" fill="#cccccc" opacity="0.45"/><rect x="18.0" y="498.4" width="5.0" height="1.6" fill="#c586c0" opacity="0.45"/><rect x="24.0" y="498.4" width="3.0" height="1.6" fill="#569cd6" opacity="0.45"/><rect x="28.0" y="498.4" width="23.0" height="1.6" fill="#4ec9b0" opacity="0.45"/><rect x="51.0" y="498.4" width="3.0" height="1.6" fill="#cccccc" opacity="0.45"/><rect x="14.0" y="500.4" width="1.0" height="1.6" fill="#cccccc" opacity="0.45"/><rect x="14.0" y="502.4" width="4.0" height="1.6" fill="#c586c0" opacity="0.45"/><rect x="19.0" y="502.4" width="2.0" height="1.6" fill="#c586c0" opacity="0.45"/><rect x="22.0" y="502.4" width="6.0" height="1.6" fill="#9cdcfe" opacity="0.45"/><rect x="29.0" y="502.4" width="1.0" height="1.6" fill="#cccccc" opacity="0.45"/><rect x="31.0" y="502.4" width="2.0" height="1.6" fill="#b5cea8" opacity="0.45"/><rect x="14.0" y="504.4" width="1.0" height="1.6" fill="#cccccc" opacity="0.45"/><rect x="18.0" y="506.4" width="5.0" height="1.6" fill="#c586c0" opacity="0.45"/><rect x="24.0" y="506.4" width="3.0" height="1.6" fill="#569cd6" opacity="0.45"/><rect x="28.0" y="506.4" width="24.0" height="1.6" fill="#4ec9b0" opacity="0.45"/><rect x="52.0" y="506.4" width="30.0" height="1.6" fill="#ce9178" opacity="0.45"/><rect x="82.0" y="506.4" width="2.0" height="1.6" fill="#cccccc" opacity="0.45"/><rect x="14.0" y="508.4" width="1.0" height="1.6" fill="#cccccc" opacity="0.45"/><rect x="14.0" y="510.4" width="4.0" height="1.6" fill="#c586c0" opacity="0.45"/><rect x="19.0" y="510.4" width="2.0" height="1.6" fill="#c586c0" opacity="0.45"/><rect x="22.0" y="510.4" width="9.0" height="1.6" fill="#9cdcfe" opacity="0.45"/><rect x="32.0" y="510.4" width="1.0" height="1.6" fill="#cccccc" opacity="0.45"/><rect x="34.0" y="510.4" width="2.0" height="1.6" fill="#b5cea8" opacity="0.45"/><rect x="14.0" y="512.4" width="1.0" height="1.6" fill="#cccccc" opacity="0.45"/><rect x="18.0" y="514.4" width="5.0" height="1.6" fill="#c586c0" opacity="0.45"/><rect x="24.0" y="514.4" width="3.0" height="1.6" fill="#569cd6" opacity="0.45"/><rect x="28.0" y="514.4" width="24.0" height="1.6" fill="#4ec9b0" opacity="0.45"/><rect x="52.0" y="514.4" width="33.0" height="1.6" fill="#ce9178" opacity="0.45"/><rect x="85.0" y="514.4" width="2.0" height="1.6" fill="#cccccc" opacity="0.45"/><rect x="14.0" y="516.4" width="1.0" height="1.6" fill="#cccccc" opacity="0.45"/><rect x="14.0" y="518.4" width="6.0" height="1.6" fill="#c586c0" opacity="0.45"/><rect x="21.0" y="518.4" width="4.0" height="1.6" fill="#569cd6" opacity="0.45"/><rect x="10.0" y="520.4" width="1.0" height="1.6" fill="#cccccc" opacity="0.45"/><rect x="6.0" y="522.4" width="1.0" height="1.6" fill="#cccccc" opacity="0.45"/><rect x="0" y="466" width="2.5" height="4" fill="#0078d4"/><rect x="0" y="474" width="2.5" height="12" fill="#0078d4"/></svg><div class="r" style="left:1140px;top:110.4px;width:1px;height:943.6px;background:#141414;"></div><div class="r" style="left:1141px;top:772px;width:17px;height:127px;background:#434343;"></div><div class="r" style="left:1140px;top:770px;width:1.5px;height:22px;background:#5b6b2a;"></div><div class="r" style="left:1142px;top:831px;width:5px;height:7px;background:#3a79b0;"></div><div class="r" style="left:1142px;top:847px;width:5px;height:18px;background:#3a79b0;"></div><div class="r" style="left:1142px;top:840px;width:16px;height:1.5px;background:#bdbdbd;"></div><div class="r" style="left:1147px;top:838px;width:5px;height:5px;background:#a0a0a0;"></div><div class="r" style="left:1158px;top:42px;width:1px;height:1012px;background:#2b2b2b;"></div><div class="r" style="left:871px;top:991px;width:258px;height:33.5px;background:#0078d4;border-radius:3px"></div><div class="a" style="left:879.13px;top:1008.12px;font-size:15.6px;color:#ffffff;transform:scaleX(0.8672);">Keep</div><div class="a" style="left:922.04px;top:1008.12px;font-size:15.6px;color:#ffffff;transform:scaleX(0.9561);">Undo</div><svg class="r" style="left:969px;top:997px;" width="20" height="21" viewBox="0 0 20 21" fill="none"><path d="M4 2.5 H12.5 L16.5 6.5 V17 Q16.5 18.5 15 18.5 H5 Q3.5 18.5 3.5 17 V4 Q3.5 2.5 5 2.5 Z" stroke="#ffffff" stroke-width="1.3" fill="none"/><path d="M10 6 V11 M7.5 8.5 H12.5 M7.5 14 H12.5" stroke="#ffffff" stroke-width="1.3"/></svg><div class="r" style="left:1000.5px;top:999px;width:1.5px;height:18px;background:#6aaee6;"></div><div class="a" style="left:1016.55px;top:1008.12px;font-size:15.6px;color:#ffffff;transform:scaleX(0.9507);">1 of 2</div><svg class="r" style="left:1071px;top:998px;" width="18" height="19" viewBox="0 0 18 19" fill="none"><path d="M9 17 V2.5 M2.5 9 L9 2.5 L15.5 9" stroke="#ffffff" stroke-width="1.6" fill="none"/></svg><svg class="r" style="left:1103px;top:998px;" width="18" height="19" viewBox="0 0 18 19" fill="none"><path d="M9 2 V16.5 M2.5 10 L9 16.5 L15.5 10" stroke="#ffffff" stroke-width="1.6" fill="none"/></svg><div class="r" style="left:1159px;top:42px;width:761px;height:1012px;background:#181818;"></div><div class="a" style="left:1182.80px;top:63.55px;font-size:12.6px;color:#e0e0e0;transform:scaleX(0.9449);">CHAT</div><div class="r" style="left:1181px;top:75.6px;width:36px;height:1.4px;background:#0078d4;"></div><div class="r" style="left:1178.5px;top:96px;width:722.5px;height:107.5px;border:1px solid #333333;border-radius:6px"></div><div class="r" style="left:1159px;top:84px;width:761px;height:28px;background:#181818;box-shadow:0 2px 4px rgba(0,0,0,0.5)"></div><svg class="r" style="left:0;top:0" width="1920" height="1080" viewBox="0 0 1920 1080"><path d="M1720.4 54 V70.8 M1712 62.4 H1728.8" stroke="#cccccc" stroke-width="1.5" fill="none"/><path d="M1745.5 58 A8.2 8.2 0 1 1 1744 65.5" stroke="#cccccc" stroke-width="1.5" fill="none"/><path d="M1744.2 54.5 V59 H1748.7" stroke="#cccccc" stroke-width="1.5" fill="none"/><path d="M1752.3 57.5 V62.6 L1755.8 65" stroke="#cccccc" stroke-width="1.5" fill="none"/><path d="M1793.57 60.90 L1793.57 64.10 L1790.61 64.54 L1789.97 66.09 L1791.75 68.50 L1789.50 70.75 L1787.09 68.97 L1785.54 69.61 L1785.10 72.57 L1781.90 72.57 L1781.46 69.61 L1779.91 68.97 L1777.50 70.75 L1775.25 68.50 L1777.03 66.09 L1776.39 64.54 L1773.43 64.10 L1773.43 60.90 L1776.39 60.46 L1777.03 58.91 L1775.25 56.50 L1777.50 54.25 L1779.91 56.03 L1781.46 55.39 L1781.90 52.43 L1785.10 52.43 L1785.54 55.39 L1787.09 56.03 L1789.50 54.25 L1791.75 56.50 L1789.97 58.91 L1790.61 60.46 Z" stroke="#cccccc" stroke-width="1.5" fill="none" stroke-linejoin="round"/><circle cx="1783.5" cy="62.5" r="2.7" stroke="#cccccc" stroke-width="1.5" fill="none"/><circle cx="1808" cy="62.5" r="1.25" fill="#cccccc"/><circle cx="1814.7" cy="62.5" r="1.25" fill="#cccccc"/><circle cx="1821.4" cy="62.5" r="1.25" fill="#cccccc"/><path d="M1837.8 53.2 V73" stroke="#555555" stroke-width="1"/><path d="M1854 59.5 V55.5 H1858 M1865.2 55.5 H1869.2 V59.5 M1869.2 66 V70 H1865.2 M1858 70 H1854 V66" stroke="#cccccc" stroke-width="1.5" fill="none"/><path d="M1887.5 57 L1898 67.5 M1898 57 L1887.5 67.5" stroke="#cccccc" stroke-width="1.5" fill="none"/><path d="M1165.8 92.5 L1171.5 98 L1165.8 103.5" stroke="#cccccc" stroke-width="1.3" fill="none"/><circle cx="1279.7" cy="98.3" r="7.2" stroke="#3794ff" stroke-width="1.7" fill="none"/><circle cx="1279.7" cy="98.3" r="2.6" fill="#3794ff"/><path d="M1184.3 359.5 L1188.5 363.8 L1196.2 355.0" stroke="#73c991" stroke-width="1.4" fill="none"/><path d="M1184.3 616.5 L1188.5 620.8 L1196.2 612.0" stroke="#73c991" stroke-width="1.4" fill="none"/><path d="M1189 318.5 L1193.5 322.6 L1189 326.7" stroke="#9d9d9d" stroke-width="1.2" fill="none"/></svg><div class="a" style="left:1186.00px;top:97.92px;font-size:15.6px;color:#cccccc;transform:scaleX(0.9389);">Todos (3/6) -</div><div class="a" style="left:1293.11px;top:97.92px;font-size:15.6px;color:#cccccc;transform:scaleX(0.8946);">Fix ForEachAsync vulnerability</div><div class="a" style="left:1193.10px;top:120.42px;font-size:15.6px;color:#cccccc;transform:scaleX(0.9199);">Continue to iterate?</div><div class="a" style="left:1193.10px;top:156.22px;font-size:15.6px;color:#cccccc;">Copilot has been working on this problem for a while. It can continue to iterate, or you can send a</div><div class="a" style="left:1192.09px;top:180.02px;font-size:15.6px;color:#cccccc;transform:scaleX(1.0064);">new message to refine your prompt.</div><div class="a" style="left:1446.50px;top:180.02px;font-size:15.6px;color:#4daafc;transform:scaleX(0.9744);">Configure max requests</div><div class="a" style="left:1607.50px;top:180.02px;font-size:15.6px;color:#cccccc;">.</div><div class="r" style="left:1177.8px;top:248.7px;width:29.5px;height:29.5px;border-radius:15px;background:#f4f4f4;overflow:hidden"><div class="r" style="left:3px;top:19.5px;width:23.5px;height:14px;border-radius:9px 9px 0 0;background:#e6e9ee;border-top:1.6px solid #333"></div><div class="r" style="left:9px;top:4.5px;width:11.5px;height:15px;border-radius:5.5px 5.5px 6px 6px;background:#c79f86"></div><div class="r" style="left:8.8px;top:3.5px;width:12px;height:4px;border-radius:4px 4px 1px 1px;background:#6d5d55"></div><div class="r" style="left:8.5px;top:9.2px;width:5.5px;height:3px;border:1.2px solid #222;border-radius:1px"></div><div class="r" style="left:15.2px;top:9.2px;width:5.5px;height:3px;border:1.2px solid #222;border-radius:1px"></div><div class="r" style="left:11.5px;top:15px;width:6.5px;height:1.5px;background:#fff;border-radius:1px"></div><div class="r" style="left:11px;top:26.5px;width:7px;height:2px;background:#3a9ad9"></div></div><div class="a" style="left:1216.30px;top:265.42px;font-size:15.6px;color:#e6e6e6;font-weight:700;transform:scaleX(0.9593);">christian-kreuzberger-dtx</div><div class="a" style="left:1405.80px;top:265.42px;font-size:15.6px;color:#9d9d9d;transform:scaleX(0.8859);">selected &quot;Pause&quot;</div><div class="a" style="left:1204.69px;top:322.64px;font-size:13.8px;color:#9d9d9d;transform:scaleX(1.0108);">Used 1 reference</div><div class="a" style="left:1205.70px;top:359.64px;font-size:13.8px;color:#9d9d9d;transform:scaleX(1.0397);">Starting (4/6)</div><div class="a" style="left:1293.30px;top:359.64px;font-size:13.8px;color:#9d9d9d;font-style:italic;transform:scaleX(0.9883);">Fix ForEachAsync vulnerability</div><div class="a" style="left:1178.00px;top:393.72px;font-size:15.6px;color:#cccccc;">Yes, let&#x27;s continue! I&#x27;ve identified the likely source of the SQL injection vulnerability.</div><div class="a" style="left:1177.72px;top:435.92px;font-size:15.6px;color:#cccccc;transform:scaleX(0.9822);">Based on my analysis, the issue appears to be with the</div><div class="r" style="left:1557.5px;top:422.4px;width:128.0px;height:24.9px;border:1px solid #3a3a3a;border-radius:5px;background:#1e1e1e"></div><svg class="r" style="left:1563.5px;top:430.0px;" width="14" height="14" viewBox="0 0 14 14" fill="none"><path d="M2.5 2.5 H1 V11.5 H2.5 M11.5 2.5 H13 V11.5 H11.5" stroke="#3f9cf5" stroke-width="1.2" fill="none"/><path d="M7 3.6 L10.3 5.4 V8.9 L7 10.7 L3.7 8.9 V5.4 Z M3.7 5.4 L7 7.2 L10.3 5.4 M7 7.2 V10.7" stroke="#5eb0ff" stroke-width="1.2" fill="none"/></svg><div class="a" style="left:1583.36px;top:435.92px;font-size:15.6px;color:#cccccc;transform:scaleX(0.9354);">ForEachAsync</div><div class="a" style="left:1691.26px;top:435.92px;font-size:15.6px;color:#cccccc;transform:scaleX(1.0440);">method in the</div><div class="r" style="left:1179.7px;top:446.5px;width:167.7px;height:23.9px;border:1px solid #3a3a3a;border-radius:5px;background:#1e1e1e"></div><svg class="r" style="left:1186px;top:453.6px;" width="12" height="10" viewBox="0 0 12 10" fill="none"><path d="M6.5 2.2 A3.1 3.1 0 1 0 6.5 7.8" stroke="#519aba" stroke-width="2" fill="none"/><path d="M8 3.5 V6.5 M9.3 3.5 V6.5" stroke="#519aba" stroke-width="0.7"/></svg><div class="a" style="left:1201.06px;top:460.32px;font-size:15.6px;color:#cccccc;transform:scaleX(0.9406);">LongTradeService.cs</div><div class="a" style="left:1353.40px;top:460.32px;font-size:15.6px;color:#cccccc;transform:scaleX(0.9965);">file at line 236. This method is known to have vulnerabilities in certain Entity</div><div class="a" style="left:1177.71px;top:483.12px;font-size:15.6px;color:#cccccc;transform:scaleX(0.9906);">Framework versions where user input (like HTTP headers including Content-Length) can be incorporated</div><div class="a" style="left:1177.71px;top:506.72px;font-size:15.6px;color:#cccccc;transform:scaleX(0.9855);">into SQL queries unsafely.</div><div class="a" style="left:1177.70px;top:549.32px;font-size:15.6px;color:#cccccc;transform:scaleX(1.0043);">Let me now fix this vulnerability by replacing the dangerous</div><div class="r" style="left:1594.3px;top:535.2px;width:128.4px;height:24.5px;border:1px solid #3a3a3a;border-radius:5px;background:#1e1e1e"></div><svg class="r" style="left:1600.5px;top:543.0px;" width="14" height="14" viewBox="0 0 14 14" fill="none"><path d="M2.5 2.5 H1 V11.5 H2.5 M11.5 2.5 H13 V11.5 H11.5" stroke="#3f9cf5" stroke-width="1.2" fill="none"/><path d="M7 3.6 L10.3 5.4 V8.9 L7 10.7 L3.7 8.9 V5.4 Z M3.7 5.4 L7 7.2 L10.3 5.4 M7 7.2 V10.7" stroke="#5eb0ff" stroke-width="1.2" fill="none"/></svg><div class="a" style="left:1620.46px;top:549.32px;font-size:15.6px;color:#cccccc;transform:scaleX(0.9374);">ForEachAsync</div><div class="a" style="left:1728.59px;top:549.32px;font-size:15.6px;color:#cccccc;transform:scaleX(1.0074);">pattern with a safer</div><div class="a" style="left:1178.70px;top:572.92px;font-size:15.6px;color:#cccccc;transform:scaleX(0.9938);">approach:</div><div class="a" style="left:1205.34px;top:617.24px;font-size:13.8px;color:#9d9d9d;transform:scaleX(0.9582);">Read</div><div class="r" style="left:1242.3px;top:603.5px;width:156.2px;height:23.7px;border:1px solid #3a3a3a;border-radius:5px;background:#181818"></div><svg class="r" style="left:1248px;top:611.3px;" width="12" height="10" viewBox="0 0 12 10" fill="none"><path d="M6.5 2.2 A3.1 3.1 0 1 0 6.5 7.8" stroke="#519aba" stroke-width="2" fill="none"/><path d="M8 3.5 V6.5 M9.3 3.5 V6.5" stroke="#519aba" stroke-width="0.7"/></svg><div class="a" style="left:1263.02px;top:617.24px;font-size:13.8px;color:#9d9d9d;transform:scaleX(0.9771);">LongTradeService.cs</div><div class="a" style="left:1398.57px;top:617.24px;font-size:13.8px;color:#9d9d9d;transform:scaleX(1.0257);">, lines 230 to 245</div><div class="a" style="left:1177.68px;top:651.32px;font-size:15.6px;color:#cccccc;transform:scaleX(1.0175);">Now I&#x27;ll fix the vulnerable</div><div class="r" style="left:1358.3px;top:636.3px;width:129.2px;height:25.4px;border:1px solid #3a3a3a;border-radius:5px;background:#1e1e1e"></div><svg class="r" style="left:1365px;top:644.0px;" width="14" height="14" viewBox="0 0 14 14" fill="none"><path d="M2.5 2.5 H1 V11.5 H2.5 M11.5 2.5 H13 V11.5 H11.5" stroke="#3f9cf5" stroke-width="1.2" fill="none"/><path d="M7 3.6 L10.3 5.4 V8.9 L7 10.7 L3.7 8.9 V5.4 Z M3.7 5.4 L7 7.2 L10.3 5.4 M7 7.2 V10.7" stroke="#5eb0ff" stroke-width="1.2" fill="none"/></svg><div class="a" style="left:1385.07px;top:651.32px;font-size:15.6px;color:#cccccc;transform:scaleX(0.9324);">ForEachAsync</div><div class="a" style="left:1492.30px;top:651.32px;font-size:15.6px;color:#cccccc;">usage by replacing it with a safer approach:</div><div class="r" style="left:1178.5px;top:680px;width:188.8px;height:25.4px;border:1px solid #3a3a3a;border-radius:5px;background:#181818"></div><svg class="r" style="left:1185.5px;top:686.5px;" width="14" height="13" viewBox="0 0 14 13" fill="none"><path d="M8.6 2.8 A4.3 4.3 0 1 0 8.6 10.2" stroke="#519aba" stroke-width="2.4" fill="none"/><path d="M10.3 4 V9 M12.1 4 V9 M9.4 5.4 H13 M9.4 7.6 H13" stroke="#519aba" stroke-width="0.9"/></svg><div class="a" style="left:1204.04px;top:692.53px;font-size:14.4px;color:#cccccc;transform:scaleX(0.8633);">LongTradeService.cs</div><div class="a" style="left:1330.40px;top:692.53px;font-size:14.4px;color:#57bb57;font-weight:700;transform:scaleX(0.9510);">+8</div><div class="a" style="left:1351.00px;top:692.53px;font-size:14.4px;color:#fc6a6a;font-weight:700;transform:scaleX(0.9928);">-2</div><div class="a" style="left:1177.68px;top:737.82px;font-size:15.6px;color:#cccccc;transform:scaleX(1.0194);">Now let me update the todo list to reflect this fix and move to the next step:</div><svg class="r" style="left:0px;top:0px;" width="1920" height="1080" viewBox="0 0 1920 1080" fill="none"><path d="M1184 764 H1188 L1193.5 759.5 V776.5 L1188 772 H1184 Z" stroke="#cccccc" stroke-width="1.2" fill="none" stroke-linejoin="round"/><path d="M1196 765 Q1197.5 768 1196 771 M1198.2 763 Q1201 768 1198.2 773" stroke="#cccccc" stroke-width="1.1" fill="none"/><path d="M1226.5 761.5 A7.3 7.3 0 1 1 1218 762.2" stroke="#cccccc" stroke-width="1.3" fill="none"/><path d="M1217 758 L1218.6 762.5 L1223 761.2" stroke="#cccccc" stroke-width="1.3" fill="none"/><path d="M1249 760.5 L1247 765 L1252 766.5 M1247.5 765 Q1252 759 1257.5 762.5 Q1261.5 767 1257 773 L1253.5 776" stroke="#cccccc" stroke-width="1.3" fill="none"/><path d="M1277.5 761 H1290 L1293 769.5 H1286 L1287 774 Q1287 777 1284 777 L1281.5 771 H1277.5 Z M1281.5 761 V771" stroke="#cccccc" stroke-width="1.2" fill="none" stroke-linejoin="round"/></svg><div class="r" style="left:1178.7px;top:892.3px;width:722px;height:143px;background:#1e1e1e;border:1px solid #333333;border-radius:6px"></div><svg class="r" style="left:1196px;top:902px;" width="12" height="16" viewBox="0 0 12 16" fill="none"><path d="M3 2.5 L9 8 L3 13.5" stroke="#cccccc" stroke-width="1.3" fill="none"/></svg><div class="a" style="left:1215.59px;top:910.93px;font-size:14.4px;color:#cccccc;transform:scaleX(0.9141);">1 file changed</div><div class="a" style="left:1305.70px;top:910.93px;font-size:14.4px;color:#57bb57;transform:scaleX(0.7681);">+8</div><div class="a" style="left:1326.70px;top:910.93px;font-size:14.4px;color:#fc6a6a;transform:scaleX(0.9615);">-2</div><div class="r" style="left:1756.2px;top:900.2px;width:45px;height:21px;background:#0078d4;border-radius:2px"></div><div class="a" style="left:1763.72px;top:910.43px;font-size:14.4px;color:#ffffff;transform:scaleX(0.8772);">Keep</div><div class="r" style="left:1808.3px;top:900.2px;width:48.7px;height:21px;background:#2a2a2a;border:1px solid #3c3c3c;border-radius:2px"></div><div class="a" style="left:1815.55px;top:910.43px;font-size:14.4px;color:#cccccc;transform:scaleX(0.9521);">Undo</div><svg class="r" style="left:1866px;top:901px;" width="20" height="19" viewBox="0 0 20 19" fill="none"><path d="M3 2 H11.5 L14.5 5 V16 Q14.5 17.3 13.2 17.3 H3 Q1.7 17.3 1.7 16 V3.3 Q1.7 2 3 2 Z" stroke="#cccccc" stroke-width="1.2" fill="none"/><path d="M16.5 3.5 L17.8 4.8 V17.5" stroke="#cccccc" stroke-width="1.1" fill="none"/><path d="M8 5.5 V10.5 M5.5 8 H10.5 M5.5 13.5 H10.5" stroke="#cccccc" stroke-width="1.2"/></svg><div class="r" style="left:1178.7px;top:926.9px;width:721.5px;height:108.7px;background:#313131;border:1px solid #3a3a3a;border-radius:6px"></div><div class="r" style="left:1186.5px;top:935.4px;width:114.2px;height:22.1px;border:1px solid #454545;border-radius:5px;background:#313131"></div><svg class="r" style="left:1194px;top:937px;" width="13" height="19" viewBox="0 0 13 19" fill="none"><path d="M3.2 5.5 V13.2 Q3.2 17.3 6.6 17.3 Q10 17.3 10 13.2 V4.8 Q10 1.6 7.4 1.6 Q4.8 1.6 4.8 4.8 V12.8 Q4.8 14.6 6.6 14.6 Q8.4 14.6 8.4 12.8 V5.5" stroke="#cccccc" stroke-width="1.15" fill="none"/></svg><div class="a" style="left:1214.00px;top:946.73px;font-size:14.4px;color:#cccccc;transform:scaleX(0.9003);">Add Context...</div><div class="r" style="left:1306.2px;top:935.4px;width:171.8px;height:22.1px;border:1px dashed #555555;border-radius:5px;background:#313131"></div><svg class="r" style="left:1314.5px;top:940px;" width="14" height="13" viewBox="0 0 14 13" fill="none"><path d="M8.6 2.8 A4.3 4.3 0 1 0 8.6 10.2" stroke="#519aba" stroke-width="2.4" fill="none"/><path d="M10.3 4 V9 M12.1 4 V9 M9.4 5.4 H13 M9.4 7.6 H13" stroke="#519aba" stroke-width="0.9"/></svg><div class="a" style="left:1336.00px;top:946.73px;font-size:14.4px;color:#cccccc;font-style:italic;transform:scaleX(0.8314);">LongTradeService.cs</div><svg class="r" style="left:1456px;top:940px;" width="14" height="14" viewBox="0 0 14 14" fill="none"><path d="M7 1 V13 M1 7 H13" stroke="#cccccc" stroke-width="1.2"/></svg><div class="a" style="left:1186.50px;top:979.32px;font-size:15.6px;color:#8f8f8f;transform:scaleX(0.9833);">Add context (#), extensions (@), commands (/)</div><div class="a" style="left:1193.60px;top:1014.43px;font-size:14.4px;color:#cccccc;transform:scaleX(0.9413);">Agent</div><svg class="r" style="left:1233px;top:1010px;" width="11" height="8" viewBox="0 0 11 8" fill="none"><path d="M1 1.5 L5.5 6 L10 1.5" stroke="#cccccc" stroke-width="1.1" fill="none"/></svg><div class="a" style="left:1262.60px;top:1014.43px;font-size:14.4px;color:#cccccc;transform:scaleX(0.8917);">Claude Sonnet 4</div><svg class="r" style="left:1366px;top:1010px;" width="11" height="8" viewBox="0 0 11 8" fill="none"><path d="M1 1.5 L5.5 6 L10 1.5" stroke="#cccccc" stroke-width="1.1" fill="none"/></svg><svg class="r" style="left:1790px;top:1004px;" width="22" height="21" viewBox="0 0 22 21" fill="none"><path d="M3 4 L5 2 L17.5 14.5 L19.5 18.5 L15.5 16.5 Z" stroke="#cccccc" stroke-width="1.2" fill="none" stroke-linejoin="round"/><path d="M3.5 17.5 L10 11 M12.5 8.5 Q11.5 5 14 3 Q16 1.5 18.5 2.5 L15.5 5.5 L16.5 6.5 L19.5 3.5 Q20.5 6 19 8 Q17 10.5 13.5 9.5 L5.5 18.5 Q4 19.5 3 18.5 Q2 17.5 3.5 16" stroke="#cccccc" stroke-width="1.2" fill="none"/></svg><svg class="r" style="left:1824px;top:1004px;" width="16" height="21" viewBox="0 0 16 21" fill="none"><rect x="4.8" y="2" width="6.4" height="11" rx="3.2" stroke="#cccccc" stroke-width="1.2" fill="none"/><path d="M2 10 Q2 15.5 8 15.5 Q14 15.5 14 10 M8 15.5 V19 M4.5 19.2 H11.5" stroke="#cccccc" stroke-width="1.2" fill="none"/></svg><svg class="r" style="left:1853px;top:1005px;" width="21" height="19" viewBox="0 0 21 19" fill="none"><path d="M2 2 L19 9.5 L2 17 L4.5 9.5 Z M4.5 9.5 H10" stroke="#cccccc" stroke-width="1.2" fill="none" stroke-linejoin="round"/></svg><svg class="r" style="left:1877px;top:1010px;" width="11" height="8" viewBox="0 0 11 8" fill="none"><path d="M1 1.5 L5.5 6 L10 1.5" stroke="#cccccc" stroke-width="1.1" fill="none"/></svg><div class="r" style="left:0px;top:1054px;width:1920px;height:26px;background:#181818;"></div><div class="r" style="left:0px;top:1054px;width:1920px;height:1px;background:#2b2b2b;"></div><div class="r" style="left:1px;top:1054.5px;width:126px;height:25.5px;background:#0078d4;border-bottom-left-radius:6px"></div><svg class="r" style="left:0px;top:1050px;" width="40" height="30" viewBox="0 0 40 30" fill="none"><path d="M15 12.2 L20.3 17.2 L15 22 M25.5 8.2 L20.8 13 L25.5 17.7" stroke="#ffffff" stroke-width="1.3" fill="none"/></svg><div class="a" style="left:32.50px;top:1067.03px;font-size:14.4px;color:#ffffff;transform:scaleX(0.9640);">WSL: Ubuntu</div><svg class="r" style="left:0px;top:0px;" width="1920" height="1080" viewBox="0 0 1920 1080" fill="none"><circle cx="142" cy="1060.5" r="2.3" stroke="#cccccc" stroke-width="1.1" fill="none"/><circle cx="142" cy="1073.5" r="2.3" stroke="#cccccc" stroke-width="1.1" fill="none"/><circle cx="149.5" cy="1064" r="2.3" stroke="#cccccc" stroke-width="1.1" fill="none"/><path d="M142 1062.8 V1071.2 M149.5 1066.3 Q149.5 1070 144 1071" stroke="#cccccc" stroke-width="1.1" fill="none"/><path d="M313 1071.5 H311.5 Q308.5 1071.5 308.5 1068.5 Q308.5 1065.6 311.5 1065.5 Q312.5 1061.5 317 1061.5 Q321.5 1061.5 322.5 1065.5 Q326 1065.8 326 1068.6 Q326 1071.5 323 1071.5 H321.5 M317.2 1074.5 V1066.5 M314.5 1069 L317.2 1066.3 L320 1069" stroke="#cccccc" stroke-width="1.1" fill="none"/><circle cx="353.5" cy="1066.5" r="7" stroke="#cccccc" stroke-width="1.1" fill="none"/><path d="M350.7 1063.7 L356.3 1069.3 M356.3 1063.7 L350.7 1069.3" stroke="#cccccc" stroke-width="1.1"/><path d="M386.5 1059.5 L394 1073 H379 Z" stroke="#cccccc" stroke-width="1.1" fill="none" stroke-linejoin="round"/><path d="M386.5 1064 V1068.5 M386.5 1070 V1071.3" stroke="#cccccc" stroke-width="1.2"/><circle cx="435" cy="1064" r="1.8" stroke="#cccccc" stroke-width="1.1" fill="none"/><path d="M431.5 1060 Q429.5 1064 431.5 1068 M438.5 1060 Q440.5 1064 438.5 1068 M429 1058 Q426 1064 429 1070 M441 1058 Q444 1064 441 1070 M435 1066 L430.5 1075 M435 1066 L439.5 1075 M432 1072 H438" stroke="#cccccc" stroke-width="1.1" fill="none"/></svg><div class="a" style="left:158.00px;top:1067.03px;font-size:14.4px;color:#cccccc;transform:scaleX(1.0425);">patch/trying-out-mcp*</div><div class="a" style="left:366.00px;top:1067.03px;font-size:14.4px;color:#cccccc;">0</div><div class="a" style="left:399.00px;top:1067.03px;font-size:14.4px;color:#cccccc;transform:scaleX(0.9375);">0</div><div class="a" style="left:445.00px;top:1067.03px;font-size:14.4px;color:#cccccc;">14</div><div class="r" style="left:1304.5px;top:1055px;width:41.5px;height:25px;background:#2a2a2a;"></div><svg class="r" style="left:1315px;top:1057px;" width="20" height="20" viewBox="0 0 20 20" fill="none"><circle cx="8.5" cy="8.5" r="6" stroke="#cccccc" stroke-width="1.3" fill="none"/><path d="M13 13 L18 18 M8.5 5.5 V11.5 M5.5 8.5 H11.5" stroke="#cccccc" stroke-width="1.3"/></svg><div class="a" style="left:1354.04px;top:1067.03px;font-size:14.4px;color:#cccccc;transform:scaleX(0.9611);">Ln 236, Col 49</div><div class="a" style="left:1464.00px;top:1067.03px;font-size:14.4px;color:#cccccc;transform:scaleX(0.9063);">Spaces: 4</div><div class="a" style="left:1541.05px;top:1067.03px;font-size:14.4px;color:#cccccc;transform:scaleX(0.9455);">UTF-8</div><div class="a" style="left:1623.00px;top:1067.03px;font-size:14.4px;color:#cccccc;transform:scaleX(0.9243);">C#</div><div class="a" style="left:1695.00px;top:1067.03px;font-size:14.4px;color:#cccccc;transform:scaleX(0.9529);">Snyk Security</div><div class="a" style="left:1818.99px;top:1067.03px;font-size:14.4px;color:#cccccc;transform:scaleX(1.0090);">Prettier</div><div class="a" style="left:1600.00px;top:1065.02px;font-size:13px;color:#cccccc;transform:scaleX(1.1194);">{ }</div><svg class="r" style="left:0px;top:0px;" width="1920" height="1080" viewBox="0 0 1920 1080" fill="none"><path d="M1661.5 1060.5 Q1664 1058.5 1666.5 1060.5 L1668 1061.8 L1669.5 1060.5 Q1672 1058.5 1674.5 1060.5 Q1676.5 1062.5 1675.5 1065 Q1677.5 1066 1677.5 1068.5 V1071 Q1677.5 1073.5 1675 1074.2 Q1671.5 1075.5 1668 1075.5 Q1664.5 1075.5 1661 1074.2 Q1658.5 1073.5 1658.5 1071 V1068.5 Q1658.5 1066 1660.5 1065 Q1659.5 1062.5 1661.5 1060.5 Z" fill="#cccccc"/><path d="M1661.5 1062 Q1663.5 1060.8 1665.5 1062 Q1666.3 1064 1665 1065.3 Q1663 1066 1661.5 1065 Q1660.7 1063.5 1661.5 1062 Z M1670.5 1062 Q1672.5 1060.8 1674.5 1062 Q1675.3 1063.5 1674.5 1065 Q1673 1066 1671 1065.3 Q1669.7 1064 1670.5 1062 Z" fill="#181818"/><path d="M1665 1068.5 V1071.5 M1671 1068.5 V1071.5" stroke="#181818" stroke-width="1.6"/><circle cx="1807.2" cy="1066" r="7" stroke="#cccccc" stroke-width="1.2" fill="none"/><path d="M1802.2 1071 L1812.2 1061" stroke="#cccccc" stroke-width="1.2"/><path d="M1888 1071.5 Q1889.6 1070 1889.8 1066.5 V1064.5 Q1890 1058.8 1894.5 1058.6 Q1896 1058.6 1897 1059.2 M1899.3 1063.5 V1066.5 Q1899.5 1070 1901 1071.5 Z M1888 1071.5 H1901" stroke="#cccccc" stroke-width="1.2" fill="none" stroke-linejoin="round"/><path d="M1892.5 1072.5 Q1894.5 1075 1896.5 1072.5 Z" fill="#cccccc"/><circle cx="1898.3" cy="1061" r="3" fill="#cccccc"/></svg><div class="r" style="left:0px;top:0px;width:1920px;height:1.3px;background:#474747;"></div><div class="r" style="left:1500px;top:0px;width:420px;height:1.3px;background:#8a6a48;"></div><div class="r" style="left:0px;top:0px;width:1px;height:1080px;background:#3f3f3f;"></div><div class="r" style="left:1918.7px;top:0px;width:1.3px;height:1080px;background:#8d7a62;"></div><div class="r" style="left:0px;top:1078.6px;width:1920px;height:1.4px;background:#6b665c;"></div><svg class="r" style="left:1px;top:1px;" width="9" height="9" viewBox="0 0 9 9" fill="none"><path d="M0 0 H9 V0.01 Q0 0 0 9 Z" fill="#474747" transform="rotate(0 4.5 4.5)"/></svg><svg class="r" style="left:1910px;top:1px;" width="9" height="9" viewBox="0 0 9 9" fill="none"><path d="M0 0 H9 V0.01 Q0 0 0 9 Z" fill="#8a6a48" transform="rotate(90 4.5 4.5)"/></svg><svg class="r" style="left:1910px;top:1070px;" width="9" height="9" viewBox="0 0 9 9" fill="none"><path d="M0 0 H9 V0.01 Q0 0 0 9 Z" fill="#7a7060" transform="rotate(180 4.5 4.5)"/></svg><svg class="r" style="left:1px;top:1070px;" width="9" height="9" viewBox="0 0 9 9" fill="none"><path d="M0 0 H9 V0.01 Q0 0 0 9 Z" fill="#4a4a4a" transform="rotate(270 4.5 4.5)"/></svg></body></html>
